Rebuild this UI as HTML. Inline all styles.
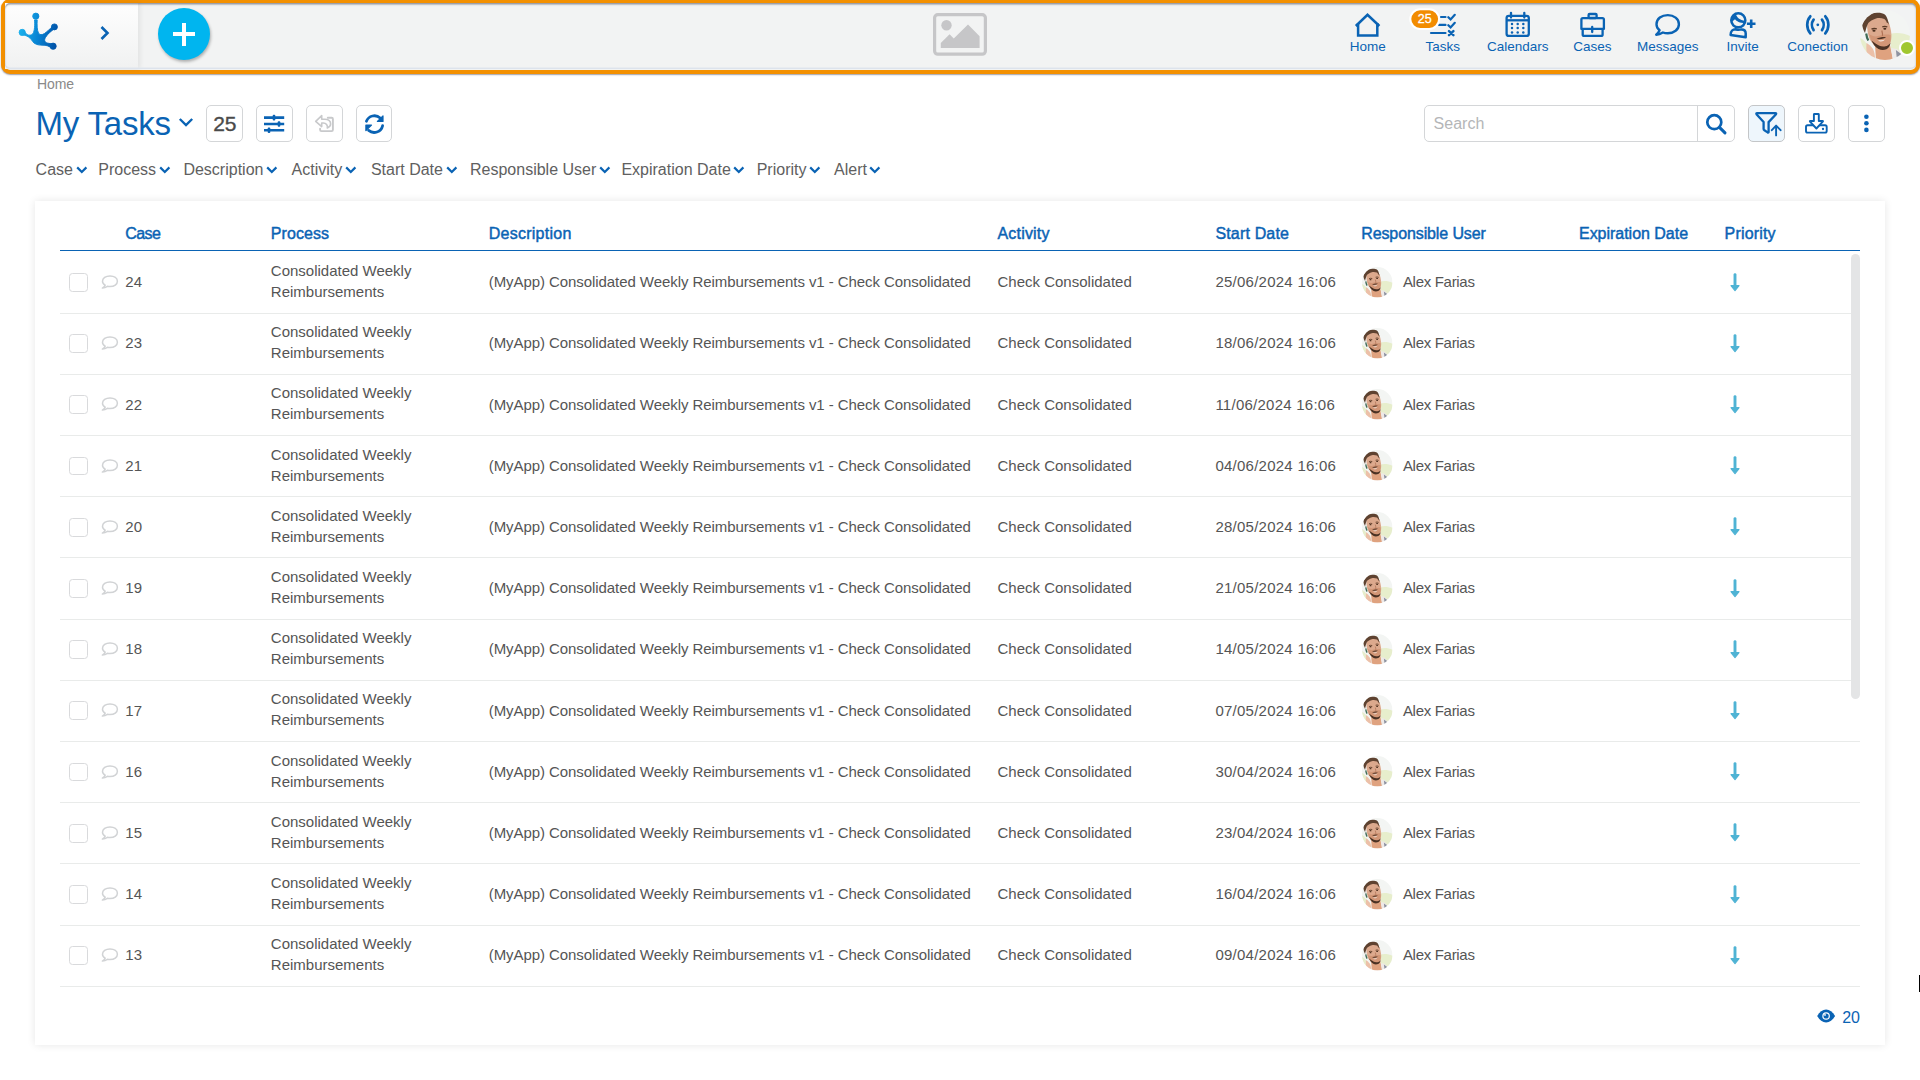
<!DOCTYPE html><html><head><meta charset="utf-8"><title>My Tasks</title><style>
*{margin:0;padding:0;box-sizing:border-box}
html,body{width:1920px;height:1080px;overflow:hidden;background:#fff;font-family:"Liberation Sans",sans-serif}
.t{position:absolute;white-space:nowrap}
.a{position:absolute}
svg{position:absolute;overflow:visible}
</style></head><body>
<div class="a" style="left:1px;top:-1px;width:1919px;height:74.6px;border:4px solid #f39000;border-bottom-width:4.8px;border-radius:9px;background:#f2f3f3;box-shadow:0 1px 1.5px rgba(40,40,60,.45);overflow:hidden"></div>
<div class="a" style="left:5px;top:3px;width:133px;height:65.8px;background:linear-gradient(#fefefe,#f0f1f1);box-shadow:2px 0 5px rgba(0,0,0,.07)"></div>
<div class="a" style="left:5px;top:3px;width:1911px;height:65.8px;border-radius:5px;box-shadow:inset 0 1.5px 1.5px rgba(50,55,75,.5), inset 0 -1.5px 0 #dfe5ee"></div>
<svg style="left:14px;top:8px" width="50" height="48" viewBox="0 0 50 48">
<defs><linearGradient id="lg" gradientUnits="userSpaceOnUse" x1="5" y1="28" x2="43" y2="34"><stop offset="0" stop-color="#1ab0ec"/><stop offset="0.5" stop-color="#0782d2"/><stop offset="1" stop-color="#0050a6"/></linearGradient></defs>
<g fill="url(#lg)" stroke="url(#lg)" stroke-width="0.9" stroke-linejoin="round">
<circle cx="21.8" cy="8.2" r="3.1"/><circle cx="8.2" cy="24.4" r="3.1"/><circle cx="40.4" cy="18.9" r="3.0"/><circle cx="39.1" cy="38.2" r="3.1"/>
<path d="M8 22.5 C11 23,11.5 25.5,13 26.5 C15 27.5,17.5 27.5,19 25.5 C20.5 23,21 17,20.5 12 L23.2 12 C23 17,23 22,24.5 25 C25.5 27,28 27.2,30.5 25.5 C33 23.5,36 21,39 18 L41 20.5 C37 23,33.5 26,31.5 29.5 C30 32,30.5 34,33 35 C35 35.6,37 35.5,39 36 L38.5 40.5 C36 39,34 37.6,31 37.3 C27 37,23 37.5,20 35 C18 33,17 30.5,14.5 29 C12 27.5,10 27,8 26.5 Z"/>
</g></svg>
<svg style="left:99px;top:25px" width="12" height="16" viewBox="0 0 12 16"><path d="M2.5 2 L8.5 8 L2.5 14" fill="none" stroke="#0a63b4" stroke-width="2.6"/></svg>
<div class="a" style="left:158px;top:8px;width:52px;height:52px;border-radius:50%;background:#00b5ef;box-shadow:1px 2px 3px rgba(0,0,0,.28)"></div>
<div class="a" style="left:173px;top:32px;width:22px;height:4.2px;background:#fff"></div>
<div class="a" style="left:181.8px;top:22.6px;width:4.4px;height:23px;background:#fff"></div>
<svg style="left:933px;top:13px" width="54" height="43" viewBox="0 0 54 43">
<rect x="1.6" y="1.6" width="50.8" height="39.6" rx="3.2" fill="none" stroke="#c6c6c8" stroke-width="3.2"/>
<circle cx="13.5" cy="12.2" r="5.2" fill="#c6c6c8"/>
<path d="M7.8 29.9 L16.6 21.2 L20.75 25.5 L35 11.6 L46.6 23.25 L46.6 34.9 L7.8 34.9 Z" fill="#c6c6c8"/>
</svg>
<svg style="left:1350px;top:8px" width="36" height="32" viewBox="1350 8 36 32">
<path d="M1355.8 26 L1367.5 14.8 L1379.4 26" fill="none" stroke="#0a63b4" stroke-width="2.5"/>
<path d="M1358.1 23 L1358.1 35.5 L1377.3 35.5 L1377.3 23" fill="none" stroke="#0a63b4" stroke-width="2.5"/>
</svg>
<svg style="left:1405px;top:5px" width="56" height="36" viewBox="1405 5 56 36">
<g fill="none" stroke="#0a63b4" stroke-width="2.2" stroke-linecap="round">
<path d="M1441 17 H1445.5"/><path d="M1439 24.9 H1445.5"/><path d="M1431 33 H1445.5"/>
<path d="M1448.3 17.2 L1450.6 19.4 L1454.8 14.8"/><path d="M1448.3 25.2 L1450.6 27.4 L1454.8 22.8"/>
<path d="M1449 31.2 L1453.4 35.2 M1453.4 31.2 L1449 35.2" stroke-width="2.5"/>
</g>
<rect x="1410.3" y="9.3" width="28.8" height="19.6" rx="9.8" fill="#f28c00" stroke="#fff" stroke-width="2"/>
</svg>
<div class="t" style="left:1410.3px;top:11.6px;width:28.8px;text-align:center;font-size:12.5px;line-height:14px;color:#fff;-webkit-text-stroke:0.3px #fff">25</div>
<svg style="left:1500px;top:8px" width="36" height="32" viewBox="1500 8 36 32">
<g fill="none" stroke="#0a63b4" stroke-width="2.3">
<rect x="1506.6" y="15.8" width="22.2" height="20.1" rx="2.2"/>
<path d="M1506.6 20.3 H1528.8"/><path d="M1511 12.8 V17.5 M1524.3 12.8 V17.5" stroke-linecap="round"/>
</g>
<g fill="#0a63b4">
<circle cx="1512" cy="23.9" r="1.25"/><circle cx="1517.7" cy="23.9" r="1.25"/><circle cx="1523.3" cy="23.9" r="1.25"/>
<circle cx="1512" cy="28.1" r="1.25"/><circle cx="1517.7" cy="28.1" r="1.25"/><circle cx="1523.3" cy="28.1" r="1.25"/>
<circle cx="1512" cy="32.4" r="1.25"/><circle cx="1517.7" cy="32.4" r="1.25"/><circle cx="1523.3" cy="32.4" r="1.25"/>
</g></svg>
<svg style="left:1575px;top:8px" width="36" height="32" viewBox="1575 8 36 32">
<g fill="none" stroke="#0a63b4" stroke-width="2.3" stroke-linejoin="round">
<rect x="1588.6" y="14" width="8" height="4" rx="1"/>
<path d="M1581.4 19.6 Q1581.4 18.1 1582.9 18.1 H1602.4 Q1603.9 18.1 1603.9 19.6 V28.9 H1581.4 Z"/>
<path d="M1582.7 29 V34.4 Q1582.7 35.9 1584.2 35.9 H1601.1 Q1602.6 35.9 1602.6 34.4 V29"/>
<path d="M1592.2 27 V32" stroke-linecap="round"/>
</g></svg>
<svg style="left:1650px;top:8px" width="36" height="32" viewBox="1650 8 36 32">
<path d="M1659.6 30.2 C1656.8 28.4 1656.5 26.2 1656.5 24.3 C1656.5 18.6 1661.7 15.1 1667.8 15.1 C1673.9 15.1 1678.9 18.8 1678.9 24.2 C1678.9 29.6 1673.9 33.3 1667.8 33.3 C1665.8 33.3 1664.2 33 1662.9 32.5 C1661 33.6 1659 34.5 1656.2 34.7 C1657.8 33.4 1659 32 1659.6 30.2 Z" fill="none" stroke="#0a63b4" stroke-width="2.4" stroke-linejoin="round"/>
</svg>
<svg style="left:1725px;top:8px" width="36" height="32" viewBox="1725 8 36 32">
<g fill="none" stroke="#0a63b4" stroke-width="2.5">
<circle cx="1738.3" cy="20.3" r="7.05"/>
<path d="M1730.6 35 C1730.6 31.2 1733 29.3 1735.5 29.3 C1737.5 29.9 1739.5 29.9 1741.5 29.4 C1744.5 29.4 1745.7 31.2 1745.7 33.5 V37.3 Z" stroke-linejoin="round"/>
<path d="M1751.2 19.6 V27.9 M1746.9 23.7 H1755.5" stroke-width="2.6"/>
</g>
<path d="M1731.3 22.8 C1731 17.5 1733 14.6 1735.6 13.5 C1736.9 17.6 1739.6 20.2 1745.3 20.8 L1745.3 23.2 C1739.6 23.2 1736.6 21.2 1735 19.3 C1733.8 20 1732.6 21.3 1731.3 22.8 Z" fill="#0a63b4"/>
</svg>
<svg style="left:1800px;top:8px" width="36" height="32" viewBox="1800 8 36 32">
<g fill="none" stroke="#0a63b4" stroke-width="2.7" stroke-linecap="round">
<path d="M1810.3 16.3 C1806.2 21 1806.2 28.6 1810.3 33.4"/>
<path d="M1825.3 16.3 C1829.4 21 1829.4 28.6 1825.3 33.4"/>
<path d="M1813.6 19.6 C1811.4 22.6 1811.4 27 1813.6 30.1"/>
<path d="M1822 19.6 C1824.2 22.6 1824.2 27 1822 30.1"/>
</g><circle cx="1817.8" cy="24.8" r="1.4" fill="#0a63b4"/></svg>
<div class="t" style="left:1317.8px;width:100px;text-align:center;top:40.17px;font-size:13.5px;line-height:13.5px;color:#0a63b4">Home</div>
<div class="t" style="left:1392.7px;width:100px;text-align:center;top:40.17px;font-size:13.5px;line-height:13.5px;color:#0a63b4">Tasks</div>
<div class="t" style="left:1467.7px;width:100px;text-align:center;top:40.17px;font-size:13.5px;line-height:13.5px;color:#0a63b4">Calendars</div>
<div class="t" style="left:1542.5px;width:100px;text-align:center;top:40.17px;font-size:13.5px;line-height:13.5px;color:#0a63b4">Cases</div>
<div class="t" style="left:1617.7px;width:100px;text-align:center;top:40.17px;font-size:13.5px;line-height:13.5px;color:#0a63b4">Messages</div>
<div class="t" style="left:1692.6px;width:100px;text-align:center;top:40.17px;font-size:13.5px;line-height:13.5px;color:#0a63b4">Invite</div>
<div class="t" style="left:1767.6px;width:100px;text-align:center;top:40.17px;font-size:13.5px;line-height:13.5px;color:#0a63b4">Conection</div>
<svg width="0" height="0" style="left:0;top:0"><defs>
<clipPath id="avc"><circle cx="25" cy="25" r="25"/></clipPath>
<linearGradient id="avbg" x1="0" y1="0" x2="0" y2="1"><stop offset="0" stop-color="#f3f4f3"/><stop offset="0.38" stop-color="#eef0ec"/><stop offset="0.55" stop-color="#dfe7bd"/><stop offset="0.72" stop-color="#e6ecc8"/><stop offset="1" stop-color="#eeeee6"/></linearGradient>
</defs></svg>
<svg style="left:1860.2px;top:9.6px" width="50" height="50" viewBox="0 0 50 50"><g>
<g clip-path="url(#avc)">
<rect width="50" height="50" fill="#f3f5f3"/>
<path d="M30 24 C36 22 44 23 50 26 L50 42 C44 44 37 42 31 40 Z" fill="#e4ecc4" opacity="0.85"/>
<path d="M0 28 C3 29 6 32 8 36 L6 50 L0 50 Z" fill="#e4ecc4" opacity="0.85"/>
<path d="M15 35 C20 38 26 38 30 35 L33 50 L16 50 Z" fill="#dfa27f"/>
<path d="M31 38 L37 39 L44 46 L40 50 L33 50 Z" fill="#eeeae8"/>
<path d="M35.9 40 L42.5 45 L40 50 L37 50 Z" fill="#8e93a0"/>
<path d="M7 13 C9 8 15 6 20 6 C24 6 27 8 28.5 12 C30 15 31 20 31.4 24 C31.6 28 31.2 31 29.8 35.5 C29 37.5 27.5 38.8 24.8 39.8 C23 40.2 21 40.2 18.8 39.4 C16.5 38.5 14.5 36 12.1 32.8 C10 30.5 8.5 27 7.7 22 C7.2 19 7 16 7 13 Z" fill="#dca98d"/>
<path d="M9 24 C12 26 15 27 18 26 C22 25 26 24 30.5 25 C31 29 30.5 33 29 36 C26 39 22 40 19 39 C15 37 11 31 9 24 Z" fill="#cf9170" opacity="0.8"/>
<path d="M2.2 14.5 C4 10 5.5 7.5 7.7 5.9 C10.5 3.8 13.5 2.7 17.1 2.7 C20.5 2.6 23 3.2 24.8 4.4 C26.5 5.8 27.5 8.5 28.1 11.3 L29.2 15.6 C28.5 13.5 27.5 12.5 27 12.9 C26 10.5 25 9.5 24.3 9.1 C21.5 8 18.5 7.8 16 8.6 C12.5 9.8 10 11.5 8.3 12.9 C7 15.5 6 18.5 5 23.1 C3.5 20.5 2.5 17.5 2.2 14.5 Z" fill="#5e4230"/>
<path d="M11.5 19.2 C13 18.4 15 18.3 16.8 18.9 M22.3 16.8 C24 16.2 25.8 16.2 27.3 17" stroke="#5a3a26" stroke-width="1.4" fill="none"/>
<ellipse cx="14" cy="20.8" rx="1.6" ry="1" fill="#4a2e1e"/><ellipse cx="24.8" cy="18.8" rx="1.5" ry="1" fill="#4a2e1e"/>
<path d="M21.8 20.5 C22.5 23 22.8 24.5 22.4 25.8" stroke="#b07255" stroke-width="1.2" fill="none"/>
<path d="M16.5 28.8 C19 27.2 22.5 26.8 26 27 C25 28.5 22 29 19 29.3 Z" fill="#4f3426"/>
<path d="M18.2 30 C20.5 30.6 23 30.4 25 29.6 C24 31.2 22 31.8 20.2 31.5 C19.2 31.3 18.6 30.8 18.2 30 Z" fill="#f2e6de"/>
<path d="M11.5 30.5 C13 34 15.5 37.5 18.5 39 C21 40.2 24 40.3 26.5 39.2 C28.5 38.2 29.8 36.5 30.5 33 C29 35 27 36 25.5 36.3 C23.5 36.7 21 36.5 19.5 35.8 C17 34.5 14 32.5 11.5 30.5 Z" fill="#4a3224"/>
<path d="M6.2 23.5 C6.5 26 7.2 28.5 8.3 30.5" stroke="#3f6a55" stroke-width="2.2" fill="none"/>
<path d="M6.5 33 C8.5 34 11 36 13 39 C14.5 42 15 45 15 50 L8 50 C6.5 45 6 39 6.5 33 Z" fill="#ecc0a8"/>
</g></g></svg>
<div class="a" style="left:1898.5px;top:39.8px;width:16.5px;height:16.5px;border-radius:50%;background:#a0c72f;border:2.3px solid #fff"></div>
<div class="t" style="left:37px;top:77.35px;font-size:14px;line-height:14px;color:#8a8a8a;letter-spacing:-0.1px;">Home</div>
<div class="t" style="left:35.4px;top:106.77px;font-size:33px;line-height:33px;color:#0a63b4;letter-spacing:-0.17px;">My Tasks</div>
<svg style="left:177px;top:115px" width="18" height="14" viewBox="0 0 18 14"><path d="M2.8 4 L9 10 L15.2 4" fill="none" stroke="#0a63b4" stroke-width="2.4"/></svg>
<div class="a" style="left:206.3px;top:105.2px;width:36.4px;height:36.6px;border:1px solid #d4d6d8;border-radius:5px;background:#fff;"></div>
<div class="a" style="left:256.2px;top:105.2px;width:36.4px;height:36.6px;border:1px solid #d4d6d8;border-radius:5px;background:#fff;"></div>
<div class="a" style="left:306.2px;top:105.2px;width:36.4px;height:36.6px;border:1px solid #d4d6d8;border-radius:5px;background:#fff;"></div>
<div class="a" style="left:356.1px;top:105.2px;width:36.4px;height:36.6px;border:1px solid #d4d6d8;border-radius:5px;background:#fff;"></div>
<div class="t" style="left:213.2px;top:112.82px;font-size:21px;line-height:21px;color:#4a4a4a;-webkit-text-stroke:0.35px #4a4a4a;">25</div>
<svg style="left:262px;top:112px" width="24" height="24" viewBox="262 112 24 24">
<g stroke="#0a63b4" stroke-width="2.6" fill="none"><path d="M264 117.6 H284.2 M264 124 H284.2 M264 130.2 H284.2"/></g>
<g fill="#0a63b4"><rect x="272.7" y="114.8" width="2.6" height="5.6" rx="1"/><rect x="277.7" y="121.2" width="2.6" height="5.6" rx="1"/><rect x="267.7" y="127.4" width="2.6" height="5.6" rx="1"/></g>
</svg>
<svg style="left:310px;top:110px" width="30" height="26" viewBox="310 110 30 26">
<g fill="none" stroke="#c8c9cb" stroke-linejoin="round" stroke-linecap="round">
<path d="M315.7 121.3 L321.7 115.6 V119.3 H324.8 C328.6 119.3 330.6 121.4 330.6 124 C330.6 125.6 329.4 127 327.3 127.9 C327.6 126.6 327.3 125.3 326.6 124.4 C325.8 123.4 324.6 123 323.2 123 H321.7 V126.6 Z" stroke-width="1.6"/>
<path d="M327.8 117.8 H331.6 Q332.9 117.8 332.9 119.1 V129.8 Q332.9 131.1 331.6 131.1 H321.4 Q320.1 131.1 320.1 129.8 V128.7" stroke-width="1.9"/>
</g></svg>
<svg style="left:360px;top:108px" width="30" height="30" viewBox="360 108 30 30">
<g fill="none" stroke="#0a63b4" stroke-width="2.8" stroke-linecap="round"><path d="M366.42 121.26 A8.6 8.6 0 0 1 380.2 118"/><path d="M382.6 125.69 A8.6 8.6 0 0 1 368.6 130.4"/></g>
<g fill="#0a63b4" stroke="#0a63b4" stroke-width="1.2" stroke-linejoin="round"><path d="M383 115.8 V121.4 H377.4 Z"/><path d="M365.9 125.1 H371.5 L365.9 130.7 Z"/></g>
</svg>
<div class="a" style="left:1423.6px;top:105.3px;width:311px;height:36.4px;border:1px solid #d4d6d8;border-radius:5px;background:#fff"></div>
<div class="a" style="left:1697px;top:106px;width:1px;height:35px;background:#d4d6d8"></div>
<div class="t" style="left:1433.6px;top:115.66px;font-size:16px;line-height:16px;color:#b4b6b8;">Search</div>
<svg style="left:1700px;top:108px" width="30" height="30" viewBox="1700 108 30 30">
<circle cx="1714.3" cy="122.2" r="7" fill="none" stroke="#0a63b4" stroke-width="2.7"/>
<path d="M1719.5 127.4 L1725 132.9" stroke="#0a63b4" stroke-width="3" stroke-linecap="round"/></svg>
<div class="a" style="left:1748.4px;top:105.2px;width:36.4px;height:36.6px;border:1px solid #c4c6c8;border-radius:5px;background:#eef6fc"></div>
<svg style="left:1750px;top:107px" width="34" height="34" viewBox="1750 107 34 34">
<path d="M1757.2 113.2 H1775.3 Q1776.8 113.2 1775.8 114.5 L1768.6 122.1 V131.9 Q1768.6 133 1767.6 132.4 L1764.4 130.3 Q1763.6 129.8 1763.6 128.9 V122.1 L1756.7 114.5 Q1755.7 113.2 1757.2 113.2 Z" fill="none" stroke="#0a63b4" stroke-width="2.3" stroke-linejoin="round"/>
<path d="M1776.1 135.4 V126 M1771.8 130.2 L1776.1 125.6 L1780.6 130.2" fill="none" stroke="#0a63b4" stroke-width="1.9" stroke-linecap="round" stroke-linejoin="round"/></svg>
<div class="a" style="left:1798.4px;top:105.2px;width:36.4px;height:36.6px;border:1px solid #d4d6d8;border-radius:5px;background:#fff;"></div>
<div class="a" style="left:1848.4px;top:105.2px;width:36.4px;height:36.6px;border:1px solid #d4d6d8;border-radius:5px;background:#fff;"></div>
<svg style="left:1800px;top:107px" width="34" height="34" viewBox="1800 107 34 34">
<g stroke="#0a63b4" stroke-width="1.9" stroke-linejoin="round">
<rect x="1806" y="125.3" width="20.7" height="7.3" rx="1.6" fill="none"/>
<path d="M1814.5 114 H1818.3 Q1818.8 114 1818.8 114.5 V121 H1822.6 Q1823.3 121 1822.8 121.6 L1816.4 128.5 L1810 121.6 Q1809.6 121 1810.2 121 H1813.9 V114.5 Q1813.9 114 1814.5 114 Z" fill="#fff"/>
</g><circle cx="1823" cy="129" r="1.15" fill="#0a63b4"/></svg>
<svg style="left:1860px;top:110px" width="14" height="26" viewBox="1860 110 14 26">
<g fill="#0a63b4"><circle cx="1866.4" cy="116.7" r="2.3"/><circle cx="1866.4" cy="123.2" r="2.3"/><circle cx="1866.4" cy="129.9" r="2.3"/></g></svg>
<div class="t" style="left:35.6px;top:161.86px;font-size:16px;line-height:16px;color:#606060;">Case</div>
<svg style="left:75.5px;top:165px" width="12" height="10" viewBox="0 0 12 10"><path d="M1.2 2.4 L5.8 7 L10.4 2.4" fill="none" stroke="#0a63b4" stroke-width="2.2"/></svg>
<div class="t" style="left:98.3px;top:161.86px;font-size:16px;line-height:16px;color:#606060;">Process</div>
<svg style="left:158.6px;top:165px" width="12" height="10" viewBox="0 0 12 10"><path d="M1.2 2.4 L5.8 7 L10.4 2.4" fill="none" stroke="#0a63b4" stroke-width="2.2"/></svg>
<div class="t" style="left:183.4px;top:161.86px;font-size:16px;line-height:16px;color:#606060;">Description</div>
<svg style="left:266.0px;top:165px" width="12" height="10" viewBox="0 0 12 10"><path d="M1.2 2.4 L5.8 7 L10.4 2.4" fill="none" stroke="#0a63b4" stroke-width="2.2"/></svg>
<div class="t" style="left:291.6px;top:161.86px;font-size:16px;line-height:16px;color:#606060;">Activity</div>
<svg style="left:344.8px;top:165px" width="12" height="10" viewBox="0 0 12 10"><path d="M1.2 2.4 L5.8 7 L10.4 2.4" fill="none" stroke="#0a63b4" stroke-width="2.2"/></svg>
<div class="t" style="left:370.9px;top:161.86px;font-size:16px;line-height:16px;color:#606060;">Start Date</div>
<svg style="left:445.5px;top:165px" width="12" height="10" viewBox="0 0 12 10"><path d="M1.2 2.4 L5.8 7 L10.4 2.4" fill="none" stroke="#0a63b4" stroke-width="2.2"/></svg>
<div class="t" style="left:470px;top:161.86px;font-size:16px;line-height:16px;color:#606060;">Responsible User</div>
<svg style="left:598.9px;top:165px" width="12" height="10" viewBox="0 0 12 10"><path d="M1.2 2.4 L5.8 7 L10.4 2.4" fill="none" stroke="#0a63b4" stroke-width="2.2"/></svg>
<div class="t" style="left:621.4px;top:161.86px;font-size:16px;line-height:16px;color:#606060;">Expiration Date</div>
<svg style="left:733.4px;top:165px" width="12" height="10" viewBox="0 0 12 10"><path d="M1.2 2.4 L5.8 7 L10.4 2.4" fill="none" stroke="#0a63b4" stroke-width="2.2"/></svg>
<div class="t" style="left:756.7px;top:161.86px;font-size:16px;line-height:16px;color:#606060;">Priority</div>
<svg style="left:809.0px;top:165px" width="12" height="10" viewBox="0 0 12 10"><path d="M1.2 2.4 L5.8 7 L10.4 2.4" fill="none" stroke="#0a63b4" stroke-width="2.2"/></svg>
<div class="t" style="left:834px;top:161.86px;font-size:16px;line-height:16px;color:#606060;">Alert</div>
<svg style="left:869.4px;top:165px" width="12" height="10" viewBox="0 0 12 10"><path d="M1.2 2.4 L5.8 7 L10.4 2.4" fill="none" stroke="#0a63b4" stroke-width="2.2"/></svg>
<div class="a" style="left:35px;top:201px;width:1850px;height:844px;background:#fff;box-shadow:0 0 8px rgba(0,0,0,.1)"></div>
<div class="t" style="left:125.3px;top:225.86px;font-size:16px;line-height:16px;color:#0a63b4;letter-spacing:-0.58px;-webkit-text-stroke:0.45px #0a63b4;">Case</div>
<div class="t" style="left:270.8px;top:225.86px;font-size:16px;line-height:16px;color:#0a63b4;letter-spacing:0.07px;-webkit-text-stroke:0.45px #0a63b4;">Process</div>
<div class="t" style="left:488.75px;top:225.86px;font-size:16px;line-height:16px;color:#0a63b4;letter-spacing:0.25px;-webkit-text-stroke:0.45px #0a63b4;">Description</div>
<div class="t" style="left:997.5px;top:225.86px;font-size:16px;line-height:16px;color:#0a63b4;letter-spacing:0.18px;-webkit-text-stroke:0.45px #0a63b4;">Activity</div>
<div class="t" style="left:1215.4px;top:225.86px;font-size:16px;line-height:16px;color:#0a63b4;letter-spacing:0.17px;-webkit-text-stroke:0.45px #0a63b4;">Start Date</div>
<div class="t" style="left:1361.25px;top:225.86px;font-size:16px;line-height:16px;color:#0a63b4;letter-spacing:-0.11px;-webkit-text-stroke:0.45px #0a63b4;">Responsible User</div>
<div class="t" style="left:1579px;top:225.86px;font-size:16px;line-height:16px;color:#0a63b4;letter-spacing:-0.025px;-webkit-text-stroke:0.45px #0a63b4;">Expiration Date</div>
<div class="t" style="left:1724.6px;top:225.86px;font-size:16px;line-height:16px;color:#0a63b4;letter-spacing:0.17px;-webkit-text-stroke:0.45px #0a63b4;">Priority</div>
<div class="a" style="left:60px;top:250px;width:1800px;height:1.3px;background:#0a63b4"></div>
<div class="a" style="left:60px;top:312.50px;width:1800px;height:1px;background:#e9ebea"></div>
<div class="a" style="left:69.2px;top:273.00px;width:18.6px;height:18.8px;border:1.3px solid #d9dadc;border-radius:3.5px"></div>
<svg style="left:101px;top:274.00px" width="18" height="16" viewBox="0 0 18 16"><path d="M4.2 11.2 C2.3 10.2 1.5 8.7 1.5 7.3 C1.5 4.1 4.7 1.9 9 1.9 C13.3 1.9 16.4 4.1 16.4 7.2 C16.4 10.3 13.3 12.6 9 12.6 C8 12.6 7.2 12.5 6.4 12.3 C5 13.2 3.4 13.9 1.4 14.1 C2.7 13.2 3.7 12.3 4.2 11.2 Z" fill="none" stroke="#d1d3d5" stroke-width="1.5" stroke-linejoin="round"/></svg>
<div class="t" style="left:125.3px;top:274.20px;font-size:15px;line-height:15px;color:#555;">24</div>
<div class="t" style="left:270.8px;top:263.00px;font-size:15px;line-height:15px;color:#555;">Consolidated Weekly</div>
<div class="t" style="left:270.8px;top:284.00px;font-size:15px;line-height:15px;color:#555;">Reimbursements</div>
<div class="t" style="left:488.75px;top:274.20px;font-size:15px;line-height:15px;color:#555;letter-spacing:-0.07px;">(MyApp) Consolidated Weekly Reimbursements v1 - Check Consolidated</div>
<div class="t" style="left:997.5px;top:274.20px;font-size:15px;line-height:15px;color:#555;">Check Consolidated</div>
<div class="t" style="left:1215.4px;top:274.20px;font-size:15px;line-height:15px;color:#555;letter-spacing:0.25px;">25/06/2024 16:06</div>
<svg style="left:1361.7px;top:266.70px" width="30.5" height="30.5" viewBox="0 0 50 50"><g>
<g clip-path="url(#avc)">
<rect width="50" height="50" fill="#f3f5f3"/>
<path d="M30 24 C36 22 44 23 50 26 L50 42 C44 44 37 42 31 40 Z" fill="#e4ecc4" opacity="0.85"/>
<path d="M0 28 C3 29 6 32 8 36 L6 50 L0 50 Z" fill="#e4ecc4" opacity="0.85"/>
<path d="M15 35 C20 38 26 38 30 35 L33 50 L16 50 Z" fill="#dfa27f"/>
<path d="M31 38 L37 39 L44 46 L40 50 L33 50 Z" fill="#eeeae8"/>
<path d="M35.9 40 L42.5 45 L40 50 L37 50 Z" fill="#8e93a0"/>
<path d="M7 13 C9 8 15 6 20 6 C24 6 27 8 28.5 12 C30 15 31 20 31.4 24 C31.6 28 31.2 31 29.8 35.5 C29 37.5 27.5 38.8 24.8 39.8 C23 40.2 21 40.2 18.8 39.4 C16.5 38.5 14.5 36 12.1 32.8 C10 30.5 8.5 27 7.7 22 C7.2 19 7 16 7 13 Z" fill="#dca98d"/>
<path d="M9 24 C12 26 15 27 18 26 C22 25 26 24 30.5 25 C31 29 30.5 33 29 36 C26 39 22 40 19 39 C15 37 11 31 9 24 Z" fill="#cf9170" opacity="0.8"/>
<path d="M2.2 14.5 C4 10 5.5 7.5 7.7 5.9 C10.5 3.8 13.5 2.7 17.1 2.7 C20.5 2.6 23 3.2 24.8 4.4 C26.5 5.8 27.5 8.5 28.1 11.3 L29.2 15.6 C28.5 13.5 27.5 12.5 27 12.9 C26 10.5 25 9.5 24.3 9.1 C21.5 8 18.5 7.8 16 8.6 C12.5 9.8 10 11.5 8.3 12.9 C7 15.5 6 18.5 5 23.1 C3.5 20.5 2.5 17.5 2.2 14.5 Z" fill="#5e4230"/>
<path d="M11.5 19.2 C13 18.4 15 18.3 16.8 18.9 M22.3 16.8 C24 16.2 25.8 16.2 27.3 17" stroke="#5a3a26" stroke-width="1.4" fill="none"/>
<ellipse cx="14" cy="20.8" rx="1.6" ry="1" fill="#4a2e1e"/><ellipse cx="24.8" cy="18.8" rx="1.5" ry="1" fill="#4a2e1e"/>
<path d="M21.8 20.5 C22.5 23 22.8 24.5 22.4 25.8" stroke="#b07255" stroke-width="1.2" fill="none"/>
<path d="M16.5 28.8 C19 27.2 22.5 26.8 26 27 C25 28.5 22 29 19 29.3 Z" fill="#4f3426"/>
<path d="M18.2 30 C20.5 30.6 23 30.4 25 29.6 C24 31.2 22 31.8 20.2 31.5 C19.2 31.3 18.6 30.8 18.2 30 Z" fill="#f2e6de"/>
<path d="M11.5 30.5 C13 34 15.5 37.5 18.5 39 C21 40.2 24 40.3 26.5 39.2 C28.5 38.2 29.8 36.5 30.5 33 C29 35 27 36 25.5 36.3 C23.5 36.7 21 36.5 19.5 35.8 C17 34.5 14 32.5 11.5 30.5 Z" fill="#4a3224"/>
<path d="M6.2 23.5 C6.5 26 7.2 28.5 8.3 30.5" stroke="#3f6a55" stroke-width="2.2" fill="none"/>
<path d="M6.5 33 C8.5 34 11 36 13 39 C14.5 42 15 45 15 50 L8 50 C6.5 45 6 39 6.5 33 Z" fill="#ecc0a8"/>
</g></g></svg>
<div class="t" style="left:1402.9px;top:274.20px;font-size:15px;line-height:15px;color:#555;letter-spacing:-0.3px;">Alex Farias</div>
<svg style="left:1729px;top:272.50px" width="12" height="20" viewBox="0 0 12 20"><path d="M6 1.6 V13" stroke="#4fb3d4" stroke-width="2.9" stroke-linecap="round"/><path d="M2 12.6 L10 12.6 L6 17.6 Z" fill="#4fb3d4" stroke="#4fb3d4" stroke-width="1.2" stroke-linejoin="round"/></svg>
<div class="a" style="left:60px;top:373.70px;width:1800px;height:1px;background:#e9ebea"></div>
<div class="a" style="left:69.2px;top:334.20px;width:18.6px;height:18.8px;border:1.3px solid #d9dadc;border-radius:3.5px"></div>
<svg style="left:101px;top:335.20px" width="18" height="16" viewBox="0 0 18 16"><path d="M4.2 11.2 C2.3 10.2 1.5 8.7 1.5 7.3 C1.5 4.1 4.7 1.9 9 1.9 C13.3 1.9 16.4 4.1 16.4 7.2 C16.4 10.3 13.3 12.6 9 12.6 C8 12.6 7.2 12.5 6.4 12.3 C5 13.2 3.4 13.9 1.4 14.1 C2.7 13.2 3.7 12.3 4.2 11.2 Z" fill="none" stroke="#d1d3d5" stroke-width="1.5" stroke-linejoin="round"/></svg>
<div class="t" style="left:125.3px;top:335.40px;font-size:15px;line-height:15px;color:#555;">23</div>
<div class="t" style="left:270.8px;top:324.20px;font-size:15px;line-height:15px;color:#555;">Consolidated Weekly</div>
<div class="t" style="left:270.8px;top:345.20px;font-size:15px;line-height:15px;color:#555;">Reimbursements</div>
<div class="t" style="left:488.75px;top:335.40px;font-size:15px;line-height:15px;color:#555;letter-spacing:-0.07px;">(MyApp) Consolidated Weekly Reimbursements v1 - Check Consolidated</div>
<div class="t" style="left:997.5px;top:335.40px;font-size:15px;line-height:15px;color:#555;">Check Consolidated</div>
<div class="t" style="left:1215.4px;top:335.40px;font-size:15px;line-height:15px;color:#555;letter-spacing:0.25px;">18/06/2024 16:06</div>
<svg style="left:1361.7px;top:327.90px" width="30.5" height="30.5" viewBox="0 0 50 50"><g>
<g clip-path="url(#avc)">
<rect width="50" height="50" fill="#f3f5f3"/>
<path d="M30 24 C36 22 44 23 50 26 L50 42 C44 44 37 42 31 40 Z" fill="#e4ecc4" opacity="0.85"/>
<path d="M0 28 C3 29 6 32 8 36 L6 50 L0 50 Z" fill="#e4ecc4" opacity="0.85"/>
<path d="M15 35 C20 38 26 38 30 35 L33 50 L16 50 Z" fill="#dfa27f"/>
<path d="M31 38 L37 39 L44 46 L40 50 L33 50 Z" fill="#eeeae8"/>
<path d="M35.9 40 L42.5 45 L40 50 L37 50 Z" fill="#8e93a0"/>
<path d="M7 13 C9 8 15 6 20 6 C24 6 27 8 28.5 12 C30 15 31 20 31.4 24 C31.6 28 31.2 31 29.8 35.5 C29 37.5 27.5 38.8 24.8 39.8 C23 40.2 21 40.2 18.8 39.4 C16.5 38.5 14.5 36 12.1 32.8 C10 30.5 8.5 27 7.7 22 C7.2 19 7 16 7 13 Z" fill="#dca98d"/>
<path d="M9 24 C12 26 15 27 18 26 C22 25 26 24 30.5 25 C31 29 30.5 33 29 36 C26 39 22 40 19 39 C15 37 11 31 9 24 Z" fill="#cf9170" opacity="0.8"/>
<path d="M2.2 14.5 C4 10 5.5 7.5 7.7 5.9 C10.5 3.8 13.5 2.7 17.1 2.7 C20.5 2.6 23 3.2 24.8 4.4 C26.5 5.8 27.5 8.5 28.1 11.3 L29.2 15.6 C28.5 13.5 27.5 12.5 27 12.9 C26 10.5 25 9.5 24.3 9.1 C21.5 8 18.5 7.8 16 8.6 C12.5 9.8 10 11.5 8.3 12.9 C7 15.5 6 18.5 5 23.1 C3.5 20.5 2.5 17.5 2.2 14.5 Z" fill="#5e4230"/>
<path d="M11.5 19.2 C13 18.4 15 18.3 16.8 18.9 M22.3 16.8 C24 16.2 25.8 16.2 27.3 17" stroke="#5a3a26" stroke-width="1.4" fill="none"/>
<ellipse cx="14" cy="20.8" rx="1.6" ry="1" fill="#4a2e1e"/><ellipse cx="24.8" cy="18.8" rx="1.5" ry="1" fill="#4a2e1e"/>
<path d="M21.8 20.5 C22.5 23 22.8 24.5 22.4 25.8" stroke="#b07255" stroke-width="1.2" fill="none"/>
<path d="M16.5 28.8 C19 27.2 22.5 26.8 26 27 C25 28.5 22 29 19 29.3 Z" fill="#4f3426"/>
<path d="M18.2 30 C20.5 30.6 23 30.4 25 29.6 C24 31.2 22 31.8 20.2 31.5 C19.2 31.3 18.6 30.8 18.2 30 Z" fill="#f2e6de"/>
<path d="M11.5 30.5 C13 34 15.5 37.5 18.5 39 C21 40.2 24 40.3 26.5 39.2 C28.5 38.2 29.8 36.5 30.5 33 C29 35 27 36 25.5 36.3 C23.5 36.7 21 36.5 19.5 35.8 C17 34.5 14 32.5 11.5 30.5 Z" fill="#4a3224"/>
<path d="M6.2 23.5 C6.5 26 7.2 28.5 8.3 30.5" stroke="#3f6a55" stroke-width="2.2" fill="none"/>
<path d="M6.5 33 C8.5 34 11 36 13 39 C14.5 42 15 45 15 50 L8 50 C6.5 45 6 39 6.5 33 Z" fill="#ecc0a8"/>
</g></g></svg>
<div class="t" style="left:1402.9px;top:335.40px;font-size:15px;line-height:15px;color:#555;letter-spacing:-0.3px;">Alex Farias</div>
<svg style="left:1729px;top:333.70px" width="12" height="20" viewBox="0 0 12 20"><path d="M6 1.6 V13" stroke="#4fb3d4" stroke-width="2.9" stroke-linecap="round"/><path d="M2 12.6 L10 12.6 L6 17.6 Z" fill="#4fb3d4" stroke="#4fb3d4" stroke-width="1.2" stroke-linejoin="round"/></svg>
<div class="a" style="left:60px;top:434.90px;width:1800px;height:1px;background:#e9ebea"></div>
<div class="a" style="left:69.2px;top:395.40px;width:18.6px;height:18.8px;border:1.3px solid #d9dadc;border-radius:3.5px"></div>
<svg style="left:101px;top:396.40px" width="18" height="16" viewBox="0 0 18 16"><path d="M4.2 11.2 C2.3 10.2 1.5 8.7 1.5 7.3 C1.5 4.1 4.7 1.9 9 1.9 C13.3 1.9 16.4 4.1 16.4 7.2 C16.4 10.3 13.3 12.6 9 12.6 C8 12.6 7.2 12.5 6.4 12.3 C5 13.2 3.4 13.9 1.4 14.1 C2.7 13.2 3.7 12.3 4.2 11.2 Z" fill="none" stroke="#d1d3d5" stroke-width="1.5" stroke-linejoin="round"/></svg>
<div class="t" style="left:125.3px;top:396.60px;font-size:15px;line-height:15px;color:#555;">22</div>
<div class="t" style="left:270.8px;top:385.40px;font-size:15px;line-height:15px;color:#555;">Consolidated Weekly</div>
<div class="t" style="left:270.8px;top:406.40px;font-size:15px;line-height:15px;color:#555;">Reimbursements</div>
<div class="t" style="left:488.75px;top:396.60px;font-size:15px;line-height:15px;color:#555;letter-spacing:-0.07px;">(MyApp) Consolidated Weekly Reimbursements v1 - Check Consolidated</div>
<div class="t" style="left:997.5px;top:396.60px;font-size:15px;line-height:15px;color:#555;">Check Consolidated</div>
<div class="t" style="left:1215.4px;top:396.60px;font-size:15px;line-height:15px;color:#555;letter-spacing:0.25px;">11/06/2024 16:06</div>
<svg style="left:1361.7px;top:389.10px" width="30.5" height="30.5" viewBox="0 0 50 50"><g>
<g clip-path="url(#avc)">
<rect width="50" height="50" fill="#f3f5f3"/>
<path d="M30 24 C36 22 44 23 50 26 L50 42 C44 44 37 42 31 40 Z" fill="#e4ecc4" opacity="0.85"/>
<path d="M0 28 C3 29 6 32 8 36 L6 50 L0 50 Z" fill="#e4ecc4" opacity="0.85"/>
<path d="M15 35 C20 38 26 38 30 35 L33 50 L16 50 Z" fill="#dfa27f"/>
<path d="M31 38 L37 39 L44 46 L40 50 L33 50 Z" fill="#eeeae8"/>
<path d="M35.9 40 L42.5 45 L40 50 L37 50 Z" fill="#8e93a0"/>
<path d="M7 13 C9 8 15 6 20 6 C24 6 27 8 28.5 12 C30 15 31 20 31.4 24 C31.6 28 31.2 31 29.8 35.5 C29 37.5 27.5 38.8 24.8 39.8 C23 40.2 21 40.2 18.8 39.4 C16.5 38.5 14.5 36 12.1 32.8 C10 30.5 8.5 27 7.7 22 C7.2 19 7 16 7 13 Z" fill="#dca98d"/>
<path d="M9 24 C12 26 15 27 18 26 C22 25 26 24 30.5 25 C31 29 30.5 33 29 36 C26 39 22 40 19 39 C15 37 11 31 9 24 Z" fill="#cf9170" opacity="0.8"/>
<path d="M2.2 14.5 C4 10 5.5 7.5 7.7 5.9 C10.5 3.8 13.5 2.7 17.1 2.7 C20.5 2.6 23 3.2 24.8 4.4 C26.5 5.8 27.5 8.5 28.1 11.3 L29.2 15.6 C28.5 13.5 27.5 12.5 27 12.9 C26 10.5 25 9.5 24.3 9.1 C21.5 8 18.5 7.8 16 8.6 C12.5 9.8 10 11.5 8.3 12.9 C7 15.5 6 18.5 5 23.1 C3.5 20.5 2.5 17.5 2.2 14.5 Z" fill="#5e4230"/>
<path d="M11.5 19.2 C13 18.4 15 18.3 16.8 18.9 M22.3 16.8 C24 16.2 25.8 16.2 27.3 17" stroke="#5a3a26" stroke-width="1.4" fill="none"/>
<ellipse cx="14" cy="20.8" rx="1.6" ry="1" fill="#4a2e1e"/><ellipse cx="24.8" cy="18.8" rx="1.5" ry="1" fill="#4a2e1e"/>
<path d="M21.8 20.5 C22.5 23 22.8 24.5 22.4 25.8" stroke="#b07255" stroke-width="1.2" fill="none"/>
<path d="M16.5 28.8 C19 27.2 22.5 26.8 26 27 C25 28.5 22 29 19 29.3 Z" fill="#4f3426"/>
<path d="M18.2 30 C20.5 30.6 23 30.4 25 29.6 C24 31.2 22 31.8 20.2 31.5 C19.2 31.3 18.6 30.8 18.2 30 Z" fill="#f2e6de"/>
<path d="M11.5 30.5 C13 34 15.5 37.5 18.5 39 C21 40.2 24 40.3 26.5 39.2 C28.5 38.2 29.8 36.5 30.5 33 C29 35 27 36 25.5 36.3 C23.5 36.7 21 36.5 19.5 35.8 C17 34.5 14 32.5 11.5 30.5 Z" fill="#4a3224"/>
<path d="M6.2 23.5 C6.5 26 7.2 28.5 8.3 30.5" stroke="#3f6a55" stroke-width="2.2" fill="none"/>
<path d="M6.5 33 C8.5 34 11 36 13 39 C14.5 42 15 45 15 50 L8 50 C6.5 45 6 39 6.5 33 Z" fill="#ecc0a8"/>
</g></g></svg>
<div class="t" style="left:1402.9px;top:396.60px;font-size:15px;line-height:15px;color:#555;letter-spacing:-0.3px;">Alex Farias</div>
<svg style="left:1729px;top:394.90px" width="12" height="20" viewBox="0 0 12 20"><path d="M6 1.6 V13" stroke="#4fb3d4" stroke-width="2.9" stroke-linecap="round"/><path d="M2 12.6 L10 12.6 L6 17.6 Z" fill="#4fb3d4" stroke="#4fb3d4" stroke-width="1.2" stroke-linejoin="round"/></svg>
<div class="a" style="left:60px;top:496.10px;width:1800px;height:1px;background:#e9ebea"></div>
<div class="a" style="left:69.2px;top:456.60px;width:18.6px;height:18.8px;border:1.3px solid #d9dadc;border-radius:3.5px"></div>
<svg style="left:101px;top:457.60px" width="18" height="16" viewBox="0 0 18 16"><path d="M4.2 11.2 C2.3 10.2 1.5 8.7 1.5 7.3 C1.5 4.1 4.7 1.9 9 1.9 C13.3 1.9 16.4 4.1 16.4 7.2 C16.4 10.3 13.3 12.6 9 12.6 C8 12.6 7.2 12.5 6.4 12.3 C5 13.2 3.4 13.9 1.4 14.1 C2.7 13.2 3.7 12.3 4.2 11.2 Z" fill="none" stroke="#d1d3d5" stroke-width="1.5" stroke-linejoin="round"/></svg>
<div class="t" style="left:125.3px;top:457.80px;font-size:15px;line-height:15px;color:#555;">21</div>
<div class="t" style="left:270.8px;top:446.60px;font-size:15px;line-height:15px;color:#555;">Consolidated Weekly</div>
<div class="t" style="left:270.8px;top:467.60px;font-size:15px;line-height:15px;color:#555;">Reimbursements</div>
<div class="t" style="left:488.75px;top:457.80px;font-size:15px;line-height:15px;color:#555;letter-spacing:-0.07px;">(MyApp) Consolidated Weekly Reimbursements v1 - Check Consolidated</div>
<div class="t" style="left:997.5px;top:457.80px;font-size:15px;line-height:15px;color:#555;">Check Consolidated</div>
<div class="t" style="left:1215.4px;top:457.80px;font-size:15px;line-height:15px;color:#555;letter-spacing:0.25px;">04/06/2024 16:06</div>
<svg style="left:1361.7px;top:450.30px" width="30.5" height="30.5" viewBox="0 0 50 50"><g>
<g clip-path="url(#avc)">
<rect width="50" height="50" fill="#f3f5f3"/>
<path d="M30 24 C36 22 44 23 50 26 L50 42 C44 44 37 42 31 40 Z" fill="#e4ecc4" opacity="0.85"/>
<path d="M0 28 C3 29 6 32 8 36 L6 50 L0 50 Z" fill="#e4ecc4" opacity="0.85"/>
<path d="M15 35 C20 38 26 38 30 35 L33 50 L16 50 Z" fill="#dfa27f"/>
<path d="M31 38 L37 39 L44 46 L40 50 L33 50 Z" fill="#eeeae8"/>
<path d="M35.9 40 L42.5 45 L40 50 L37 50 Z" fill="#8e93a0"/>
<path d="M7 13 C9 8 15 6 20 6 C24 6 27 8 28.5 12 C30 15 31 20 31.4 24 C31.6 28 31.2 31 29.8 35.5 C29 37.5 27.5 38.8 24.8 39.8 C23 40.2 21 40.2 18.8 39.4 C16.5 38.5 14.5 36 12.1 32.8 C10 30.5 8.5 27 7.7 22 C7.2 19 7 16 7 13 Z" fill="#dca98d"/>
<path d="M9 24 C12 26 15 27 18 26 C22 25 26 24 30.5 25 C31 29 30.5 33 29 36 C26 39 22 40 19 39 C15 37 11 31 9 24 Z" fill="#cf9170" opacity="0.8"/>
<path d="M2.2 14.5 C4 10 5.5 7.5 7.7 5.9 C10.5 3.8 13.5 2.7 17.1 2.7 C20.5 2.6 23 3.2 24.8 4.4 C26.5 5.8 27.5 8.5 28.1 11.3 L29.2 15.6 C28.5 13.5 27.5 12.5 27 12.9 C26 10.5 25 9.5 24.3 9.1 C21.5 8 18.5 7.8 16 8.6 C12.5 9.8 10 11.5 8.3 12.9 C7 15.5 6 18.5 5 23.1 C3.5 20.5 2.5 17.5 2.2 14.5 Z" fill="#5e4230"/>
<path d="M11.5 19.2 C13 18.4 15 18.3 16.8 18.9 M22.3 16.8 C24 16.2 25.8 16.2 27.3 17" stroke="#5a3a26" stroke-width="1.4" fill="none"/>
<ellipse cx="14" cy="20.8" rx="1.6" ry="1" fill="#4a2e1e"/><ellipse cx="24.8" cy="18.8" rx="1.5" ry="1" fill="#4a2e1e"/>
<path d="M21.8 20.5 C22.5 23 22.8 24.5 22.4 25.8" stroke="#b07255" stroke-width="1.2" fill="none"/>
<path d="M16.5 28.8 C19 27.2 22.5 26.8 26 27 C25 28.5 22 29 19 29.3 Z" fill="#4f3426"/>
<path d="M18.2 30 C20.5 30.6 23 30.4 25 29.6 C24 31.2 22 31.8 20.2 31.5 C19.2 31.3 18.6 30.8 18.2 30 Z" fill="#f2e6de"/>
<path d="M11.5 30.5 C13 34 15.5 37.5 18.5 39 C21 40.2 24 40.3 26.5 39.2 C28.5 38.2 29.8 36.5 30.5 33 C29 35 27 36 25.5 36.3 C23.5 36.7 21 36.5 19.5 35.8 C17 34.5 14 32.5 11.5 30.5 Z" fill="#4a3224"/>
<path d="M6.2 23.5 C6.5 26 7.2 28.5 8.3 30.5" stroke="#3f6a55" stroke-width="2.2" fill="none"/>
<path d="M6.5 33 C8.5 34 11 36 13 39 C14.5 42 15 45 15 50 L8 50 C6.5 45 6 39 6.5 33 Z" fill="#ecc0a8"/>
</g></g></svg>
<div class="t" style="left:1402.9px;top:457.80px;font-size:15px;line-height:15px;color:#555;letter-spacing:-0.3px;">Alex Farias</div>
<svg style="left:1729px;top:456.10px" width="12" height="20" viewBox="0 0 12 20"><path d="M6 1.6 V13" stroke="#4fb3d4" stroke-width="2.9" stroke-linecap="round"/><path d="M2 12.6 L10 12.6 L6 17.6 Z" fill="#4fb3d4" stroke="#4fb3d4" stroke-width="1.2" stroke-linejoin="round"/></svg>
<div class="a" style="left:60px;top:557.30px;width:1800px;height:1px;background:#e9ebea"></div>
<div class="a" style="left:69.2px;top:517.80px;width:18.6px;height:18.8px;border:1.3px solid #d9dadc;border-radius:3.5px"></div>
<svg style="left:101px;top:518.80px" width="18" height="16" viewBox="0 0 18 16"><path d="M4.2 11.2 C2.3 10.2 1.5 8.7 1.5 7.3 C1.5 4.1 4.7 1.9 9 1.9 C13.3 1.9 16.4 4.1 16.4 7.2 C16.4 10.3 13.3 12.6 9 12.6 C8 12.6 7.2 12.5 6.4 12.3 C5 13.2 3.4 13.9 1.4 14.1 C2.7 13.2 3.7 12.3 4.2 11.2 Z" fill="none" stroke="#d1d3d5" stroke-width="1.5" stroke-linejoin="round"/></svg>
<div class="t" style="left:125.3px;top:519.00px;font-size:15px;line-height:15px;color:#555;">20</div>
<div class="t" style="left:270.8px;top:507.80px;font-size:15px;line-height:15px;color:#555;">Consolidated Weekly</div>
<div class="t" style="left:270.8px;top:528.80px;font-size:15px;line-height:15px;color:#555;">Reimbursements</div>
<div class="t" style="left:488.75px;top:519.00px;font-size:15px;line-height:15px;color:#555;letter-spacing:-0.07px;">(MyApp) Consolidated Weekly Reimbursements v1 - Check Consolidated</div>
<div class="t" style="left:997.5px;top:519.00px;font-size:15px;line-height:15px;color:#555;">Check Consolidated</div>
<div class="t" style="left:1215.4px;top:519.00px;font-size:15px;line-height:15px;color:#555;letter-spacing:0.25px;">28/05/2024 16:06</div>
<svg style="left:1361.7px;top:511.50px" width="30.5" height="30.5" viewBox="0 0 50 50"><g>
<g clip-path="url(#avc)">
<rect width="50" height="50" fill="#f3f5f3"/>
<path d="M30 24 C36 22 44 23 50 26 L50 42 C44 44 37 42 31 40 Z" fill="#e4ecc4" opacity="0.85"/>
<path d="M0 28 C3 29 6 32 8 36 L6 50 L0 50 Z" fill="#e4ecc4" opacity="0.85"/>
<path d="M15 35 C20 38 26 38 30 35 L33 50 L16 50 Z" fill="#dfa27f"/>
<path d="M31 38 L37 39 L44 46 L40 50 L33 50 Z" fill="#eeeae8"/>
<path d="M35.9 40 L42.5 45 L40 50 L37 50 Z" fill="#8e93a0"/>
<path d="M7 13 C9 8 15 6 20 6 C24 6 27 8 28.5 12 C30 15 31 20 31.4 24 C31.6 28 31.2 31 29.8 35.5 C29 37.5 27.5 38.8 24.8 39.8 C23 40.2 21 40.2 18.8 39.4 C16.5 38.5 14.5 36 12.1 32.8 C10 30.5 8.5 27 7.7 22 C7.2 19 7 16 7 13 Z" fill="#dca98d"/>
<path d="M9 24 C12 26 15 27 18 26 C22 25 26 24 30.5 25 C31 29 30.5 33 29 36 C26 39 22 40 19 39 C15 37 11 31 9 24 Z" fill="#cf9170" opacity="0.8"/>
<path d="M2.2 14.5 C4 10 5.5 7.5 7.7 5.9 C10.5 3.8 13.5 2.7 17.1 2.7 C20.5 2.6 23 3.2 24.8 4.4 C26.5 5.8 27.5 8.5 28.1 11.3 L29.2 15.6 C28.5 13.5 27.5 12.5 27 12.9 C26 10.5 25 9.5 24.3 9.1 C21.5 8 18.5 7.8 16 8.6 C12.5 9.8 10 11.5 8.3 12.9 C7 15.5 6 18.5 5 23.1 C3.5 20.5 2.5 17.5 2.2 14.5 Z" fill="#5e4230"/>
<path d="M11.5 19.2 C13 18.4 15 18.3 16.8 18.9 M22.3 16.8 C24 16.2 25.8 16.2 27.3 17" stroke="#5a3a26" stroke-width="1.4" fill="none"/>
<ellipse cx="14" cy="20.8" rx="1.6" ry="1" fill="#4a2e1e"/><ellipse cx="24.8" cy="18.8" rx="1.5" ry="1" fill="#4a2e1e"/>
<path d="M21.8 20.5 C22.5 23 22.8 24.5 22.4 25.8" stroke="#b07255" stroke-width="1.2" fill="none"/>
<path d="M16.5 28.8 C19 27.2 22.5 26.8 26 27 C25 28.5 22 29 19 29.3 Z" fill="#4f3426"/>
<path d="M18.2 30 C20.5 30.6 23 30.4 25 29.6 C24 31.2 22 31.8 20.2 31.5 C19.2 31.3 18.6 30.8 18.2 30 Z" fill="#f2e6de"/>
<path d="M11.5 30.5 C13 34 15.5 37.5 18.5 39 C21 40.2 24 40.3 26.5 39.2 C28.5 38.2 29.8 36.5 30.5 33 C29 35 27 36 25.5 36.3 C23.5 36.7 21 36.5 19.5 35.8 C17 34.5 14 32.5 11.5 30.5 Z" fill="#4a3224"/>
<path d="M6.2 23.5 C6.5 26 7.2 28.5 8.3 30.5" stroke="#3f6a55" stroke-width="2.2" fill="none"/>
<path d="M6.5 33 C8.5 34 11 36 13 39 C14.5 42 15 45 15 50 L8 50 C6.5 45 6 39 6.5 33 Z" fill="#ecc0a8"/>
</g></g></svg>
<div class="t" style="left:1402.9px;top:519.00px;font-size:15px;line-height:15px;color:#555;letter-spacing:-0.3px;">Alex Farias</div>
<svg style="left:1729px;top:517.30px" width="12" height="20" viewBox="0 0 12 20"><path d="M6 1.6 V13" stroke="#4fb3d4" stroke-width="2.9" stroke-linecap="round"/><path d="M2 12.6 L10 12.6 L6 17.6 Z" fill="#4fb3d4" stroke="#4fb3d4" stroke-width="1.2" stroke-linejoin="round"/></svg>
<div class="a" style="left:60px;top:618.50px;width:1800px;height:1px;background:#e9ebea"></div>
<div class="a" style="left:69.2px;top:579.00px;width:18.6px;height:18.8px;border:1.3px solid #d9dadc;border-radius:3.5px"></div>
<svg style="left:101px;top:580.00px" width="18" height="16" viewBox="0 0 18 16"><path d="M4.2 11.2 C2.3 10.2 1.5 8.7 1.5 7.3 C1.5 4.1 4.7 1.9 9 1.9 C13.3 1.9 16.4 4.1 16.4 7.2 C16.4 10.3 13.3 12.6 9 12.6 C8 12.6 7.2 12.5 6.4 12.3 C5 13.2 3.4 13.9 1.4 14.1 C2.7 13.2 3.7 12.3 4.2 11.2 Z" fill="none" stroke="#d1d3d5" stroke-width="1.5" stroke-linejoin="round"/></svg>
<div class="t" style="left:125.3px;top:580.20px;font-size:15px;line-height:15px;color:#555;">19</div>
<div class="t" style="left:270.8px;top:569.00px;font-size:15px;line-height:15px;color:#555;">Consolidated Weekly</div>
<div class="t" style="left:270.8px;top:590.00px;font-size:15px;line-height:15px;color:#555;">Reimbursements</div>
<div class="t" style="left:488.75px;top:580.20px;font-size:15px;line-height:15px;color:#555;letter-spacing:-0.07px;">(MyApp) Consolidated Weekly Reimbursements v1 - Check Consolidated</div>
<div class="t" style="left:997.5px;top:580.20px;font-size:15px;line-height:15px;color:#555;">Check Consolidated</div>
<div class="t" style="left:1215.4px;top:580.20px;font-size:15px;line-height:15px;color:#555;letter-spacing:0.25px;">21/05/2024 16:06</div>
<svg style="left:1361.7px;top:572.70px" width="30.5" height="30.5" viewBox="0 0 50 50"><g>
<g clip-path="url(#avc)">
<rect width="50" height="50" fill="#f3f5f3"/>
<path d="M30 24 C36 22 44 23 50 26 L50 42 C44 44 37 42 31 40 Z" fill="#e4ecc4" opacity="0.85"/>
<path d="M0 28 C3 29 6 32 8 36 L6 50 L0 50 Z" fill="#e4ecc4" opacity="0.85"/>
<path d="M15 35 C20 38 26 38 30 35 L33 50 L16 50 Z" fill="#dfa27f"/>
<path d="M31 38 L37 39 L44 46 L40 50 L33 50 Z" fill="#eeeae8"/>
<path d="M35.9 40 L42.5 45 L40 50 L37 50 Z" fill="#8e93a0"/>
<path d="M7 13 C9 8 15 6 20 6 C24 6 27 8 28.5 12 C30 15 31 20 31.4 24 C31.6 28 31.2 31 29.8 35.5 C29 37.5 27.5 38.8 24.8 39.8 C23 40.2 21 40.2 18.8 39.4 C16.5 38.5 14.5 36 12.1 32.8 C10 30.5 8.5 27 7.7 22 C7.2 19 7 16 7 13 Z" fill="#dca98d"/>
<path d="M9 24 C12 26 15 27 18 26 C22 25 26 24 30.5 25 C31 29 30.5 33 29 36 C26 39 22 40 19 39 C15 37 11 31 9 24 Z" fill="#cf9170" opacity="0.8"/>
<path d="M2.2 14.5 C4 10 5.5 7.5 7.7 5.9 C10.5 3.8 13.5 2.7 17.1 2.7 C20.5 2.6 23 3.2 24.8 4.4 C26.5 5.8 27.5 8.5 28.1 11.3 L29.2 15.6 C28.5 13.5 27.5 12.5 27 12.9 C26 10.5 25 9.5 24.3 9.1 C21.5 8 18.5 7.8 16 8.6 C12.5 9.8 10 11.5 8.3 12.9 C7 15.5 6 18.5 5 23.1 C3.5 20.5 2.5 17.5 2.2 14.5 Z" fill="#5e4230"/>
<path d="M11.5 19.2 C13 18.4 15 18.3 16.8 18.9 M22.3 16.8 C24 16.2 25.8 16.2 27.3 17" stroke="#5a3a26" stroke-width="1.4" fill="none"/>
<ellipse cx="14" cy="20.8" rx="1.6" ry="1" fill="#4a2e1e"/><ellipse cx="24.8" cy="18.8" rx="1.5" ry="1" fill="#4a2e1e"/>
<path d="M21.8 20.5 C22.5 23 22.8 24.5 22.4 25.8" stroke="#b07255" stroke-width="1.2" fill="none"/>
<path d="M16.5 28.8 C19 27.2 22.5 26.8 26 27 C25 28.5 22 29 19 29.3 Z" fill="#4f3426"/>
<path d="M18.2 30 C20.5 30.6 23 30.4 25 29.6 C24 31.2 22 31.8 20.2 31.5 C19.2 31.3 18.6 30.8 18.2 30 Z" fill="#f2e6de"/>
<path d="M11.5 30.5 C13 34 15.5 37.5 18.5 39 C21 40.2 24 40.3 26.5 39.2 C28.5 38.2 29.8 36.5 30.5 33 C29 35 27 36 25.5 36.3 C23.5 36.7 21 36.5 19.5 35.8 C17 34.5 14 32.5 11.5 30.5 Z" fill="#4a3224"/>
<path d="M6.2 23.5 C6.5 26 7.2 28.5 8.3 30.5" stroke="#3f6a55" stroke-width="2.2" fill="none"/>
<path d="M6.5 33 C8.5 34 11 36 13 39 C14.5 42 15 45 15 50 L8 50 C6.5 45 6 39 6.5 33 Z" fill="#ecc0a8"/>
</g></g></svg>
<div class="t" style="left:1402.9px;top:580.20px;font-size:15px;line-height:15px;color:#555;letter-spacing:-0.3px;">Alex Farias</div>
<svg style="left:1729px;top:578.50px" width="12" height="20" viewBox="0 0 12 20"><path d="M6 1.6 V13" stroke="#4fb3d4" stroke-width="2.9" stroke-linecap="round"/><path d="M2 12.6 L10 12.6 L6 17.6 Z" fill="#4fb3d4" stroke="#4fb3d4" stroke-width="1.2" stroke-linejoin="round"/></svg>
<div class="a" style="left:60px;top:679.70px;width:1800px;height:1px;background:#e9ebea"></div>
<div class="a" style="left:69.2px;top:640.20px;width:18.6px;height:18.8px;border:1.3px solid #d9dadc;border-radius:3.5px"></div>
<svg style="left:101px;top:641.20px" width="18" height="16" viewBox="0 0 18 16"><path d="M4.2 11.2 C2.3 10.2 1.5 8.7 1.5 7.3 C1.5 4.1 4.7 1.9 9 1.9 C13.3 1.9 16.4 4.1 16.4 7.2 C16.4 10.3 13.3 12.6 9 12.6 C8 12.6 7.2 12.5 6.4 12.3 C5 13.2 3.4 13.9 1.4 14.1 C2.7 13.2 3.7 12.3 4.2 11.2 Z" fill="none" stroke="#d1d3d5" stroke-width="1.5" stroke-linejoin="round"/></svg>
<div class="t" style="left:125.3px;top:641.40px;font-size:15px;line-height:15px;color:#555;">18</div>
<div class="t" style="left:270.8px;top:630.20px;font-size:15px;line-height:15px;color:#555;">Consolidated Weekly</div>
<div class="t" style="left:270.8px;top:651.20px;font-size:15px;line-height:15px;color:#555;">Reimbursements</div>
<div class="t" style="left:488.75px;top:641.40px;font-size:15px;line-height:15px;color:#555;letter-spacing:-0.07px;">(MyApp) Consolidated Weekly Reimbursements v1 - Check Consolidated</div>
<div class="t" style="left:997.5px;top:641.40px;font-size:15px;line-height:15px;color:#555;">Check Consolidated</div>
<div class="t" style="left:1215.4px;top:641.40px;font-size:15px;line-height:15px;color:#555;letter-spacing:0.25px;">14/05/2024 16:06</div>
<svg style="left:1361.7px;top:633.90px" width="30.5" height="30.5" viewBox="0 0 50 50"><g>
<g clip-path="url(#avc)">
<rect width="50" height="50" fill="#f3f5f3"/>
<path d="M30 24 C36 22 44 23 50 26 L50 42 C44 44 37 42 31 40 Z" fill="#e4ecc4" opacity="0.85"/>
<path d="M0 28 C3 29 6 32 8 36 L6 50 L0 50 Z" fill="#e4ecc4" opacity="0.85"/>
<path d="M15 35 C20 38 26 38 30 35 L33 50 L16 50 Z" fill="#dfa27f"/>
<path d="M31 38 L37 39 L44 46 L40 50 L33 50 Z" fill="#eeeae8"/>
<path d="M35.9 40 L42.5 45 L40 50 L37 50 Z" fill="#8e93a0"/>
<path d="M7 13 C9 8 15 6 20 6 C24 6 27 8 28.5 12 C30 15 31 20 31.4 24 C31.6 28 31.2 31 29.8 35.5 C29 37.5 27.5 38.8 24.8 39.8 C23 40.2 21 40.2 18.8 39.4 C16.5 38.5 14.5 36 12.1 32.8 C10 30.5 8.5 27 7.7 22 C7.2 19 7 16 7 13 Z" fill="#dca98d"/>
<path d="M9 24 C12 26 15 27 18 26 C22 25 26 24 30.5 25 C31 29 30.5 33 29 36 C26 39 22 40 19 39 C15 37 11 31 9 24 Z" fill="#cf9170" opacity="0.8"/>
<path d="M2.2 14.5 C4 10 5.5 7.5 7.7 5.9 C10.5 3.8 13.5 2.7 17.1 2.7 C20.5 2.6 23 3.2 24.8 4.4 C26.5 5.8 27.5 8.5 28.1 11.3 L29.2 15.6 C28.5 13.5 27.5 12.5 27 12.9 C26 10.5 25 9.5 24.3 9.1 C21.5 8 18.5 7.8 16 8.6 C12.5 9.8 10 11.5 8.3 12.9 C7 15.5 6 18.5 5 23.1 C3.5 20.5 2.5 17.5 2.2 14.5 Z" fill="#5e4230"/>
<path d="M11.5 19.2 C13 18.4 15 18.3 16.8 18.9 M22.3 16.8 C24 16.2 25.8 16.2 27.3 17" stroke="#5a3a26" stroke-width="1.4" fill="none"/>
<ellipse cx="14" cy="20.8" rx="1.6" ry="1" fill="#4a2e1e"/><ellipse cx="24.8" cy="18.8" rx="1.5" ry="1" fill="#4a2e1e"/>
<path d="M21.8 20.5 C22.5 23 22.8 24.5 22.4 25.8" stroke="#b07255" stroke-width="1.2" fill="none"/>
<path d="M16.5 28.8 C19 27.2 22.5 26.8 26 27 C25 28.5 22 29 19 29.3 Z" fill="#4f3426"/>
<path d="M18.2 30 C20.5 30.6 23 30.4 25 29.6 C24 31.2 22 31.8 20.2 31.5 C19.2 31.3 18.6 30.8 18.2 30 Z" fill="#f2e6de"/>
<path d="M11.5 30.5 C13 34 15.5 37.5 18.5 39 C21 40.2 24 40.3 26.5 39.2 C28.5 38.2 29.8 36.5 30.5 33 C29 35 27 36 25.5 36.3 C23.5 36.7 21 36.5 19.5 35.8 C17 34.5 14 32.5 11.5 30.5 Z" fill="#4a3224"/>
<path d="M6.2 23.5 C6.5 26 7.2 28.5 8.3 30.5" stroke="#3f6a55" stroke-width="2.2" fill="none"/>
<path d="M6.5 33 C8.5 34 11 36 13 39 C14.5 42 15 45 15 50 L8 50 C6.5 45 6 39 6.5 33 Z" fill="#ecc0a8"/>
</g></g></svg>
<div class="t" style="left:1402.9px;top:641.40px;font-size:15px;line-height:15px;color:#555;letter-spacing:-0.3px;">Alex Farias</div>
<svg style="left:1729px;top:639.70px" width="12" height="20" viewBox="0 0 12 20"><path d="M6 1.6 V13" stroke="#4fb3d4" stroke-width="2.9" stroke-linecap="round"/><path d="M2 12.6 L10 12.6 L6 17.6 Z" fill="#4fb3d4" stroke="#4fb3d4" stroke-width="1.2" stroke-linejoin="round"/></svg>
<div class="a" style="left:60px;top:740.90px;width:1800px;height:1px;background:#e9ebea"></div>
<div class="a" style="left:69.2px;top:701.40px;width:18.6px;height:18.8px;border:1.3px solid #d9dadc;border-radius:3.5px"></div>
<svg style="left:101px;top:702.40px" width="18" height="16" viewBox="0 0 18 16"><path d="M4.2 11.2 C2.3 10.2 1.5 8.7 1.5 7.3 C1.5 4.1 4.7 1.9 9 1.9 C13.3 1.9 16.4 4.1 16.4 7.2 C16.4 10.3 13.3 12.6 9 12.6 C8 12.6 7.2 12.5 6.4 12.3 C5 13.2 3.4 13.9 1.4 14.1 C2.7 13.2 3.7 12.3 4.2 11.2 Z" fill="none" stroke="#d1d3d5" stroke-width="1.5" stroke-linejoin="round"/></svg>
<div class="t" style="left:125.3px;top:702.60px;font-size:15px;line-height:15px;color:#555;">17</div>
<div class="t" style="left:270.8px;top:691.40px;font-size:15px;line-height:15px;color:#555;">Consolidated Weekly</div>
<div class="t" style="left:270.8px;top:712.40px;font-size:15px;line-height:15px;color:#555;">Reimbursements</div>
<div class="t" style="left:488.75px;top:702.60px;font-size:15px;line-height:15px;color:#555;letter-spacing:-0.07px;">(MyApp) Consolidated Weekly Reimbursements v1 - Check Consolidated</div>
<div class="t" style="left:997.5px;top:702.60px;font-size:15px;line-height:15px;color:#555;">Check Consolidated</div>
<div class="t" style="left:1215.4px;top:702.60px;font-size:15px;line-height:15px;color:#555;letter-spacing:0.25px;">07/05/2024 16:06</div>
<svg style="left:1361.7px;top:695.10px" width="30.5" height="30.5" viewBox="0 0 50 50"><g>
<g clip-path="url(#avc)">
<rect width="50" height="50" fill="#f3f5f3"/>
<path d="M30 24 C36 22 44 23 50 26 L50 42 C44 44 37 42 31 40 Z" fill="#e4ecc4" opacity="0.85"/>
<path d="M0 28 C3 29 6 32 8 36 L6 50 L0 50 Z" fill="#e4ecc4" opacity="0.85"/>
<path d="M15 35 C20 38 26 38 30 35 L33 50 L16 50 Z" fill="#dfa27f"/>
<path d="M31 38 L37 39 L44 46 L40 50 L33 50 Z" fill="#eeeae8"/>
<path d="M35.9 40 L42.5 45 L40 50 L37 50 Z" fill="#8e93a0"/>
<path d="M7 13 C9 8 15 6 20 6 C24 6 27 8 28.5 12 C30 15 31 20 31.4 24 C31.6 28 31.2 31 29.8 35.5 C29 37.5 27.5 38.8 24.8 39.8 C23 40.2 21 40.2 18.8 39.4 C16.5 38.5 14.5 36 12.1 32.8 C10 30.5 8.5 27 7.7 22 C7.2 19 7 16 7 13 Z" fill="#dca98d"/>
<path d="M9 24 C12 26 15 27 18 26 C22 25 26 24 30.5 25 C31 29 30.5 33 29 36 C26 39 22 40 19 39 C15 37 11 31 9 24 Z" fill="#cf9170" opacity="0.8"/>
<path d="M2.2 14.5 C4 10 5.5 7.5 7.7 5.9 C10.5 3.8 13.5 2.7 17.1 2.7 C20.5 2.6 23 3.2 24.8 4.4 C26.5 5.8 27.5 8.5 28.1 11.3 L29.2 15.6 C28.5 13.5 27.5 12.5 27 12.9 C26 10.5 25 9.5 24.3 9.1 C21.5 8 18.5 7.8 16 8.6 C12.5 9.8 10 11.5 8.3 12.9 C7 15.5 6 18.5 5 23.1 C3.5 20.5 2.5 17.5 2.2 14.5 Z" fill="#5e4230"/>
<path d="M11.5 19.2 C13 18.4 15 18.3 16.8 18.9 M22.3 16.8 C24 16.2 25.8 16.2 27.3 17" stroke="#5a3a26" stroke-width="1.4" fill="none"/>
<ellipse cx="14" cy="20.8" rx="1.6" ry="1" fill="#4a2e1e"/><ellipse cx="24.8" cy="18.8" rx="1.5" ry="1" fill="#4a2e1e"/>
<path d="M21.8 20.5 C22.5 23 22.8 24.5 22.4 25.8" stroke="#b07255" stroke-width="1.2" fill="none"/>
<path d="M16.5 28.8 C19 27.2 22.5 26.8 26 27 C25 28.5 22 29 19 29.3 Z" fill="#4f3426"/>
<path d="M18.2 30 C20.5 30.6 23 30.4 25 29.6 C24 31.2 22 31.8 20.2 31.5 C19.2 31.3 18.6 30.8 18.2 30 Z" fill="#f2e6de"/>
<path d="M11.5 30.5 C13 34 15.5 37.5 18.5 39 C21 40.2 24 40.3 26.5 39.2 C28.5 38.2 29.8 36.5 30.5 33 C29 35 27 36 25.5 36.3 C23.5 36.7 21 36.5 19.5 35.8 C17 34.5 14 32.5 11.5 30.5 Z" fill="#4a3224"/>
<path d="M6.2 23.5 C6.5 26 7.2 28.5 8.3 30.5" stroke="#3f6a55" stroke-width="2.2" fill="none"/>
<path d="M6.5 33 C8.5 34 11 36 13 39 C14.5 42 15 45 15 50 L8 50 C6.5 45 6 39 6.5 33 Z" fill="#ecc0a8"/>
</g></g></svg>
<div class="t" style="left:1402.9px;top:702.60px;font-size:15px;line-height:15px;color:#555;letter-spacing:-0.3px;">Alex Farias</div>
<svg style="left:1729px;top:700.90px" width="12" height="20" viewBox="0 0 12 20"><path d="M6 1.6 V13" stroke="#4fb3d4" stroke-width="2.9" stroke-linecap="round"/><path d="M2 12.6 L10 12.6 L6 17.6 Z" fill="#4fb3d4" stroke="#4fb3d4" stroke-width="1.2" stroke-linejoin="round"/></svg>
<div class="a" style="left:60px;top:802.10px;width:1800px;height:1px;background:#e9ebea"></div>
<div class="a" style="left:69.2px;top:762.60px;width:18.6px;height:18.8px;border:1.3px solid #d9dadc;border-radius:3.5px"></div>
<svg style="left:101px;top:763.60px" width="18" height="16" viewBox="0 0 18 16"><path d="M4.2 11.2 C2.3 10.2 1.5 8.7 1.5 7.3 C1.5 4.1 4.7 1.9 9 1.9 C13.3 1.9 16.4 4.1 16.4 7.2 C16.4 10.3 13.3 12.6 9 12.6 C8 12.6 7.2 12.5 6.4 12.3 C5 13.2 3.4 13.9 1.4 14.1 C2.7 13.2 3.7 12.3 4.2 11.2 Z" fill="none" stroke="#d1d3d5" stroke-width="1.5" stroke-linejoin="round"/></svg>
<div class="t" style="left:125.3px;top:763.80px;font-size:15px;line-height:15px;color:#555;">16</div>
<div class="t" style="left:270.8px;top:752.60px;font-size:15px;line-height:15px;color:#555;">Consolidated Weekly</div>
<div class="t" style="left:270.8px;top:773.60px;font-size:15px;line-height:15px;color:#555;">Reimbursements</div>
<div class="t" style="left:488.75px;top:763.80px;font-size:15px;line-height:15px;color:#555;letter-spacing:-0.07px;">(MyApp) Consolidated Weekly Reimbursements v1 - Check Consolidated</div>
<div class="t" style="left:997.5px;top:763.80px;font-size:15px;line-height:15px;color:#555;">Check Consolidated</div>
<div class="t" style="left:1215.4px;top:763.80px;font-size:15px;line-height:15px;color:#555;letter-spacing:0.25px;">30/04/2024 16:06</div>
<svg style="left:1361.7px;top:756.30px" width="30.5" height="30.5" viewBox="0 0 50 50"><g>
<g clip-path="url(#avc)">
<rect width="50" height="50" fill="#f3f5f3"/>
<path d="M30 24 C36 22 44 23 50 26 L50 42 C44 44 37 42 31 40 Z" fill="#e4ecc4" opacity="0.85"/>
<path d="M0 28 C3 29 6 32 8 36 L6 50 L0 50 Z" fill="#e4ecc4" opacity="0.85"/>
<path d="M15 35 C20 38 26 38 30 35 L33 50 L16 50 Z" fill="#dfa27f"/>
<path d="M31 38 L37 39 L44 46 L40 50 L33 50 Z" fill="#eeeae8"/>
<path d="M35.9 40 L42.5 45 L40 50 L37 50 Z" fill="#8e93a0"/>
<path d="M7 13 C9 8 15 6 20 6 C24 6 27 8 28.5 12 C30 15 31 20 31.4 24 C31.6 28 31.2 31 29.8 35.5 C29 37.5 27.5 38.8 24.8 39.8 C23 40.2 21 40.2 18.8 39.4 C16.5 38.5 14.5 36 12.1 32.8 C10 30.5 8.5 27 7.7 22 C7.2 19 7 16 7 13 Z" fill="#dca98d"/>
<path d="M9 24 C12 26 15 27 18 26 C22 25 26 24 30.5 25 C31 29 30.5 33 29 36 C26 39 22 40 19 39 C15 37 11 31 9 24 Z" fill="#cf9170" opacity="0.8"/>
<path d="M2.2 14.5 C4 10 5.5 7.5 7.7 5.9 C10.5 3.8 13.5 2.7 17.1 2.7 C20.5 2.6 23 3.2 24.8 4.4 C26.5 5.8 27.5 8.5 28.1 11.3 L29.2 15.6 C28.5 13.5 27.5 12.5 27 12.9 C26 10.5 25 9.5 24.3 9.1 C21.5 8 18.5 7.8 16 8.6 C12.5 9.8 10 11.5 8.3 12.9 C7 15.5 6 18.5 5 23.1 C3.5 20.5 2.5 17.5 2.2 14.5 Z" fill="#5e4230"/>
<path d="M11.5 19.2 C13 18.4 15 18.3 16.8 18.9 M22.3 16.8 C24 16.2 25.8 16.2 27.3 17" stroke="#5a3a26" stroke-width="1.4" fill="none"/>
<ellipse cx="14" cy="20.8" rx="1.6" ry="1" fill="#4a2e1e"/><ellipse cx="24.8" cy="18.8" rx="1.5" ry="1" fill="#4a2e1e"/>
<path d="M21.8 20.5 C22.5 23 22.8 24.5 22.4 25.8" stroke="#b07255" stroke-width="1.2" fill="none"/>
<path d="M16.5 28.8 C19 27.2 22.5 26.8 26 27 C25 28.5 22 29 19 29.3 Z" fill="#4f3426"/>
<path d="M18.2 30 C20.5 30.6 23 30.4 25 29.6 C24 31.2 22 31.8 20.2 31.5 C19.2 31.3 18.6 30.8 18.2 30 Z" fill="#f2e6de"/>
<path d="M11.5 30.5 C13 34 15.5 37.5 18.5 39 C21 40.2 24 40.3 26.5 39.2 C28.5 38.2 29.8 36.5 30.5 33 C29 35 27 36 25.5 36.3 C23.5 36.7 21 36.5 19.5 35.8 C17 34.5 14 32.5 11.5 30.5 Z" fill="#4a3224"/>
<path d="M6.2 23.5 C6.5 26 7.2 28.5 8.3 30.5" stroke="#3f6a55" stroke-width="2.2" fill="none"/>
<path d="M6.5 33 C8.5 34 11 36 13 39 C14.5 42 15 45 15 50 L8 50 C6.5 45 6 39 6.5 33 Z" fill="#ecc0a8"/>
</g></g></svg>
<div class="t" style="left:1402.9px;top:763.80px;font-size:15px;line-height:15px;color:#555;letter-spacing:-0.3px;">Alex Farias</div>
<svg style="left:1729px;top:762.10px" width="12" height="20" viewBox="0 0 12 20"><path d="M6 1.6 V13" stroke="#4fb3d4" stroke-width="2.9" stroke-linecap="round"/><path d="M2 12.6 L10 12.6 L6 17.6 Z" fill="#4fb3d4" stroke="#4fb3d4" stroke-width="1.2" stroke-linejoin="round"/></svg>
<div class="a" style="left:60px;top:863.30px;width:1800px;height:1px;background:#e9ebea"></div>
<div class="a" style="left:69.2px;top:823.80px;width:18.6px;height:18.8px;border:1.3px solid #d9dadc;border-radius:3.5px"></div>
<svg style="left:101px;top:824.80px" width="18" height="16" viewBox="0 0 18 16"><path d="M4.2 11.2 C2.3 10.2 1.5 8.7 1.5 7.3 C1.5 4.1 4.7 1.9 9 1.9 C13.3 1.9 16.4 4.1 16.4 7.2 C16.4 10.3 13.3 12.6 9 12.6 C8 12.6 7.2 12.5 6.4 12.3 C5 13.2 3.4 13.9 1.4 14.1 C2.7 13.2 3.7 12.3 4.2 11.2 Z" fill="none" stroke="#d1d3d5" stroke-width="1.5" stroke-linejoin="round"/></svg>
<div class="t" style="left:125.3px;top:825.00px;font-size:15px;line-height:15px;color:#555;">15</div>
<div class="t" style="left:270.8px;top:813.80px;font-size:15px;line-height:15px;color:#555;">Consolidated Weekly</div>
<div class="t" style="left:270.8px;top:834.80px;font-size:15px;line-height:15px;color:#555;">Reimbursements</div>
<div class="t" style="left:488.75px;top:825.00px;font-size:15px;line-height:15px;color:#555;letter-spacing:-0.07px;">(MyApp) Consolidated Weekly Reimbursements v1 - Check Consolidated</div>
<div class="t" style="left:997.5px;top:825.00px;font-size:15px;line-height:15px;color:#555;">Check Consolidated</div>
<div class="t" style="left:1215.4px;top:825.00px;font-size:15px;line-height:15px;color:#555;letter-spacing:0.25px;">23/04/2024 16:06</div>
<svg style="left:1361.7px;top:817.50px" width="30.5" height="30.5" viewBox="0 0 50 50"><g>
<g clip-path="url(#avc)">
<rect width="50" height="50" fill="#f3f5f3"/>
<path d="M30 24 C36 22 44 23 50 26 L50 42 C44 44 37 42 31 40 Z" fill="#e4ecc4" opacity="0.85"/>
<path d="M0 28 C3 29 6 32 8 36 L6 50 L0 50 Z" fill="#e4ecc4" opacity="0.85"/>
<path d="M15 35 C20 38 26 38 30 35 L33 50 L16 50 Z" fill="#dfa27f"/>
<path d="M31 38 L37 39 L44 46 L40 50 L33 50 Z" fill="#eeeae8"/>
<path d="M35.9 40 L42.5 45 L40 50 L37 50 Z" fill="#8e93a0"/>
<path d="M7 13 C9 8 15 6 20 6 C24 6 27 8 28.5 12 C30 15 31 20 31.4 24 C31.6 28 31.2 31 29.8 35.5 C29 37.5 27.5 38.8 24.8 39.8 C23 40.2 21 40.2 18.8 39.4 C16.5 38.5 14.5 36 12.1 32.8 C10 30.5 8.5 27 7.7 22 C7.2 19 7 16 7 13 Z" fill="#dca98d"/>
<path d="M9 24 C12 26 15 27 18 26 C22 25 26 24 30.5 25 C31 29 30.5 33 29 36 C26 39 22 40 19 39 C15 37 11 31 9 24 Z" fill="#cf9170" opacity="0.8"/>
<path d="M2.2 14.5 C4 10 5.5 7.5 7.7 5.9 C10.5 3.8 13.5 2.7 17.1 2.7 C20.5 2.6 23 3.2 24.8 4.4 C26.5 5.8 27.5 8.5 28.1 11.3 L29.2 15.6 C28.5 13.5 27.5 12.5 27 12.9 C26 10.5 25 9.5 24.3 9.1 C21.5 8 18.5 7.8 16 8.6 C12.5 9.8 10 11.5 8.3 12.9 C7 15.5 6 18.5 5 23.1 C3.5 20.5 2.5 17.5 2.2 14.5 Z" fill="#5e4230"/>
<path d="M11.5 19.2 C13 18.4 15 18.3 16.8 18.9 M22.3 16.8 C24 16.2 25.8 16.2 27.3 17" stroke="#5a3a26" stroke-width="1.4" fill="none"/>
<ellipse cx="14" cy="20.8" rx="1.6" ry="1" fill="#4a2e1e"/><ellipse cx="24.8" cy="18.8" rx="1.5" ry="1" fill="#4a2e1e"/>
<path d="M21.8 20.5 C22.5 23 22.8 24.5 22.4 25.8" stroke="#b07255" stroke-width="1.2" fill="none"/>
<path d="M16.5 28.8 C19 27.2 22.5 26.8 26 27 C25 28.5 22 29 19 29.3 Z" fill="#4f3426"/>
<path d="M18.2 30 C20.5 30.6 23 30.4 25 29.6 C24 31.2 22 31.8 20.2 31.5 C19.2 31.3 18.6 30.8 18.2 30 Z" fill="#f2e6de"/>
<path d="M11.5 30.5 C13 34 15.5 37.5 18.5 39 C21 40.2 24 40.3 26.5 39.2 C28.5 38.2 29.8 36.5 30.5 33 C29 35 27 36 25.5 36.3 C23.5 36.7 21 36.5 19.5 35.8 C17 34.5 14 32.5 11.5 30.5 Z" fill="#4a3224"/>
<path d="M6.2 23.5 C6.5 26 7.2 28.5 8.3 30.5" stroke="#3f6a55" stroke-width="2.2" fill="none"/>
<path d="M6.5 33 C8.5 34 11 36 13 39 C14.5 42 15 45 15 50 L8 50 C6.5 45 6 39 6.5 33 Z" fill="#ecc0a8"/>
</g></g></svg>
<div class="t" style="left:1402.9px;top:825.00px;font-size:15px;line-height:15px;color:#555;letter-spacing:-0.3px;">Alex Farias</div>
<svg style="left:1729px;top:823.30px" width="12" height="20" viewBox="0 0 12 20"><path d="M6 1.6 V13" stroke="#4fb3d4" stroke-width="2.9" stroke-linecap="round"/><path d="M2 12.6 L10 12.6 L6 17.6 Z" fill="#4fb3d4" stroke="#4fb3d4" stroke-width="1.2" stroke-linejoin="round"/></svg>
<div class="a" style="left:60px;top:924.50px;width:1800px;height:1px;background:#e9ebea"></div>
<div class="a" style="left:69.2px;top:885.00px;width:18.6px;height:18.8px;border:1.3px solid #d9dadc;border-radius:3.5px"></div>
<svg style="left:101px;top:886.00px" width="18" height="16" viewBox="0 0 18 16"><path d="M4.2 11.2 C2.3 10.2 1.5 8.7 1.5 7.3 C1.5 4.1 4.7 1.9 9 1.9 C13.3 1.9 16.4 4.1 16.4 7.2 C16.4 10.3 13.3 12.6 9 12.6 C8 12.6 7.2 12.5 6.4 12.3 C5 13.2 3.4 13.9 1.4 14.1 C2.7 13.2 3.7 12.3 4.2 11.2 Z" fill="none" stroke="#d1d3d5" stroke-width="1.5" stroke-linejoin="round"/></svg>
<div class="t" style="left:125.3px;top:886.20px;font-size:15px;line-height:15px;color:#555;">14</div>
<div class="t" style="left:270.8px;top:875.00px;font-size:15px;line-height:15px;color:#555;">Consolidated Weekly</div>
<div class="t" style="left:270.8px;top:896.00px;font-size:15px;line-height:15px;color:#555;">Reimbursements</div>
<div class="t" style="left:488.75px;top:886.20px;font-size:15px;line-height:15px;color:#555;letter-spacing:-0.07px;">(MyApp) Consolidated Weekly Reimbursements v1 - Check Consolidated</div>
<div class="t" style="left:997.5px;top:886.20px;font-size:15px;line-height:15px;color:#555;">Check Consolidated</div>
<div class="t" style="left:1215.4px;top:886.20px;font-size:15px;line-height:15px;color:#555;letter-spacing:0.25px;">16/04/2024 16:06</div>
<svg style="left:1361.7px;top:878.70px" width="30.5" height="30.5" viewBox="0 0 50 50"><g>
<g clip-path="url(#avc)">
<rect width="50" height="50" fill="#f3f5f3"/>
<path d="M30 24 C36 22 44 23 50 26 L50 42 C44 44 37 42 31 40 Z" fill="#e4ecc4" opacity="0.85"/>
<path d="M0 28 C3 29 6 32 8 36 L6 50 L0 50 Z" fill="#e4ecc4" opacity="0.85"/>
<path d="M15 35 C20 38 26 38 30 35 L33 50 L16 50 Z" fill="#dfa27f"/>
<path d="M31 38 L37 39 L44 46 L40 50 L33 50 Z" fill="#eeeae8"/>
<path d="M35.9 40 L42.5 45 L40 50 L37 50 Z" fill="#8e93a0"/>
<path d="M7 13 C9 8 15 6 20 6 C24 6 27 8 28.5 12 C30 15 31 20 31.4 24 C31.6 28 31.2 31 29.8 35.5 C29 37.5 27.5 38.8 24.8 39.8 C23 40.2 21 40.2 18.8 39.4 C16.5 38.5 14.5 36 12.1 32.8 C10 30.5 8.5 27 7.7 22 C7.2 19 7 16 7 13 Z" fill="#dca98d"/>
<path d="M9 24 C12 26 15 27 18 26 C22 25 26 24 30.5 25 C31 29 30.5 33 29 36 C26 39 22 40 19 39 C15 37 11 31 9 24 Z" fill="#cf9170" opacity="0.8"/>
<path d="M2.2 14.5 C4 10 5.5 7.5 7.7 5.9 C10.5 3.8 13.5 2.7 17.1 2.7 C20.5 2.6 23 3.2 24.8 4.4 C26.5 5.8 27.5 8.5 28.1 11.3 L29.2 15.6 C28.5 13.5 27.5 12.5 27 12.9 C26 10.5 25 9.5 24.3 9.1 C21.5 8 18.5 7.8 16 8.6 C12.5 9.8 10 11.5 8.3 12.9 C7 15.5 6 18.5 5 23.1 C3.5 20.5 2.5 17.5 2.2 14.5 Z" fill="#5e4230"/>
<path d="M11.5 19.2 C13 18.4 15 18.3 16.8 18.9 M22.3 16.8 C24 16.2 25.8 16.2 27.3 17" stroke="#5a3a26" stroke-width="1.4" fill="none"/>
<ellipse cx="14" cy="20.8" rx="1.6" ry="1" fill="#4a2e1e"/><ellipse cx="24.8" cy="18.8" rx="1.5" ry="1" fill="#4a2e1e"/>
<path d="M21.8 20.5 C22.5 23 22.8 24.5 22.4 25.8" stroke="#b07255" stroke-width="1.2" fill="none"/>
<path d="M16.5 28.8 C19 27.2 22.5 26.8 26 27 C25 28.5 22 29 19 29.3 Z" fill="#4f3426"/>
<path d="M18.2 30 C20.5 30.6 23 30.4 25 29.6 C24 31.2 22 31.8 20.2 31.5 C19.2 31.3 18.6 30.8 18.2 30 Z" fill="#f2e6de"/>
<path d="M11.5 30.5 C13 34 15.5 37.5 18.5 39 C21 40.2 24 40.3 26.5 39.2 C28.5 38.2 29.8 36.5 30.5 33 C29 35 27 36 25.5 36.3 C23.5 36.7 21 36.5 19.5 35.8 C17 34.5 14 32.5 11.5 30.5 Z" fill="#4a3224"/>
<path d="M6.2 23.5 C6.5 26 7.2 28.5 8.3 30.5" stroke="#3f6a55" stroke-width="2.2" fill="none"/>
<path d="M6.5 33 C8.5 34 11 36 13 39 C14.5 42 15 45 15 50 L8 50 C6.5 45 6 39 6.5 33 Z" fill="#ecc0a8"/>
</g></g></svg>
<div class="t" style="left:1402.9px;top:886.20px;font-size:15px;line-height:15px;color:#555;letter-spacing:-0.3px;">Alex Farias</div>
<svg style="left:1729px;top:884.50px" width="12" height="20" viewBox="0 0 12 20"><path d="M6 1.6 V13" stroke="#4fb3d4" stroke-width="2.9" stroke-linecap="round"/><path d="M2 12.6 L10 12.6 L6 17.6 Z" fill="#4fb3d4" stroke="#4fb3d4" stroke-width="1.2" stroke-linejoin="round"/></svg>
<div class="a" style="left:60px;top:985.70px;width:1800px;height:1px;background:#e9ebea"></div>
<div class="a" style="left:69.2px;top:946.20px;width:18.6px;height:18.8px;border:1.3px solid #d9dadc;border-radius:3.5px"></div>
<svg style="left:101px;top:947.20px" width="18" height="16" viewBox="0 0 18 16"><path d="M4.2 11.2 C2.3 10.2 1.5 8.7 1.5 7.3 C1.5 4.1 4.7 1.9 9 1.9 C13.3 1.9 16.4 4.1 16.4 7.2 C16.4 10.3 13.3 12.6 9 12.6 C8 12.6 7.2 12.5 6.4 12.3 C5 13.2 3.4 13.9 1.4 14.1 C2.7 13.2 3.7 12.3 4.2 11.2 Z" fill="none" stroke="#d1d3d5" stroke-width="1.5" stroke-linejoin="round"/></svg>
<div class="t" style="left:125.3px;top:947.40px;font-size:15px;line-height:15px;color:#555;">13</div>
<div class="t" style="left:270.8px;top:936.20px;font-size:15px;line-height:15px;color:#555;">Consolidated Weekly</div>
<div class="t" style="left:270.8px;top:957.20px;font-size:15px;line-height:15px;color:#555;">Reimbursements</div>
<div class="t" style="left:488.75px;top:947.40px;font-size:15px;line-height:15px;color:#555;letter-spacing:-0.07px;">(MyApp) Consolidated Weekly Reimbursements v1 - Check Consolidated</div>
<div class="t" style="left:997.5px;top:947.40px;font-size:15px;line-height:15px;color:#555;">Check Consolidated</div>
<div class="t" style="left:1215.4px;top:947.40px;font-size:15px;line-height:15px;color:#555;letter-spacing:0.25px;">09/04/2024 16:06</div>
<svg style="left:1361.7px;top:939.90px" width="30.5" height="30.5" viewBox="0 0 50 50"><g>
<g clip-path="url(#avc)">
<rect width="50" height="50" fill="#f3f5f3"/>
<path d="M30 24 C36 22 44 23 50 26 L50 42 C44 44 37 42 31 40 Z" fill="#e4ecc4" opacity="0.85"/>
<path d="M0 28 C3 29 6 32 8 36 L6 50 L0 50 Z" fill="#e4ecc4" opacity="0.85"/>
<path d="M15 35 C20 38 26 38 30 35 L33 50 L16 50 Z" fill="#dfa27f"/>
<path d="M31 38 L37 39 L44 46 L40 50 L33 50 Z" fill="#eeeae8"/>
<path d="M35.9 40 L42.5 45 L40 50 L37 50 Z" fill="#8e93a0"/>
<path d="M7 13 C9 8 15 6 20 6 C24 6 27 8 28.5 12 C30 15 31 20 31.4 24 C31.6 28 31.2 31 29.8 35.5 C29 37.5 27.5 38.8 24.8 39.8 C23 40.2 21 40.2 18.8 39.4 C16.5 38.5 14.5 36 12.1 32.8 C10 30.5 8.5 27 7.7 22 C7.2 19 7 16 7 13 Z" fill="#dca98d"/>
<path d="M9 24 C12 26 15 27 18 26 C22 25 26 24 30.5 25 C31 29 30.5 33 29 36 C26 39 22 40 19 39 C15 37 11 31 9 24 Z" fill="#cf9170" opacity="0.8"/>
<path d="M2.2 14.5 C4 10 5.5 7.5 7.7 5.9 C10.5 3.8 13.5 2.7 17.1 2.7 C20.5 2.6 23 3.2 24.8 4.4 C26.5 5.8 27.5 8.5 28.1 11.3 L29.2 15.6 C28.5 13.5 27.5 12.5 27 12.9 C26 10.5 25 9.5 24.3 9.1 C21.5 8 18.5 7.8 16 8.6 C12.5 9.8 10 11.5 8.3 12.9 C7 15.5 6 18.5 5 23.1 C3.5 20.5 2.5 17.5 2.2 14.5 Z" fill="#5e4230"/>
<path d="M11.5 19.2 C13 18.4 15 18.3 16.8 18.9 M22.3 16.8 C24 16.2 25.8 16.2 27.3 17" stroke="#5a3a26" stroke-width="1.4" fill="none"/>
<ellipse cx="14" cy="20.8" rx="1.6" ry="1" fill="#4a2e1e"/><ellipse cx="24.8" cy="18.8" rx="1.5" ry="1" fill="#4a2e1e"/>
<path d="M21.8 20.5 C22.5 23 22.8 24.5 22.4 25.8" stroke="#b07255" stroke-width="1.2" fill="none"/>
<path d="M16.5 28.8 C19 27.2 22.5 26.8 26 27 C25 28.5 22 29 19 29.3 Z" fill="#4f3426"/>
<path d="M18.2 30 C20.5 30.6 23 30.4 25 29.6 C24 31.2 22 31.8 20.2 31.5 C19.2 31.3 18.6 30.8 18.2 30 Z" fill="#f2e6de"/>
<path d="M11.5 30.5 C13 34 15.5 37.5 18.5 39 C21 40.2 24 40.3 26.5 39.2 C28.5 38.2 29.8 36.5 30.5 33 C29 35 27 36 25.5 36.3 C23.5 36.7 21 36.5 19.5 35.8 C17 34.5 14 32.5 11.5 30.5 Z" fill="#4a3224"/>
<path d="M6.2 23.5 C6.5 26 7.2 28.5 8.3 30.5" stroke="#3f6a55" stroke-width="2.2" fill="none"/>
<path d="M6.5 33 C8.5 34 11 36 13 39 C14.5 42 15 45 15 50 L8 50 C6.5 45 6 39 6.5 33 Z" fill="#ecc0a8"/>
</g></g></svg>
<div class="t" style="left:1402.9px;top:947.40px;font-size:15px;line-height:15px;color:#555;letter-spacing:-0.3px;">Alex Farias</div>
<svg style="left:1729px;top:945.70px" width="12" height="20" viewBox="0 0 12 20"><path d="M6 1.6 V13" stroke="#4fb3d4" stroke-width="2.9" stroke-linecap="round"/><path d="M2 12.6 L10 12.6 L6 17.6 Z" fill="#4fb3d4" stroke="#4fb3d4" stroke-width="1.2" stroke-linejoin="round"/></svg>
<div class="a" style="left:1851px;top:254px;width:9px;height:445px;border-radius:4.5px;background:#e4e5e6"></div>
<svg style="left:1815px;top:1006px" width="22" height="20" viewBox="1815 1006 22 20">
<path d="M1817.2 1016 C1819.5 1012 1822.6 1009.6 1826.1 1009.6 C1829.6 1009.6 1832.7 1012 1835.1 1016 C1832.7 1020 1829.6 1022.4 1826.1 1022.4 C1822.6 1022.4 1819.5 1020 1817.2 1016 Z" fill="#0a63b4"/>
<circle cx="1826.1" cy="1016" r="3.8" fill="#fff"/><circle cx="1826.1" cy="1016" r="2.6" fill="#0a63b4"/><circle cx="1825" cy="1014.9" r="0.9" fill="#fff"/></svg>
<div class="t" style="left:1842.2px;top:1009.66px;font-size:16px;line-height:16px;color:#0a63b4;">20</div>
<div class="a" style="left:1919px;top:975px;width:1.5px;height:17px;background:#000"></div>
</body></html>
